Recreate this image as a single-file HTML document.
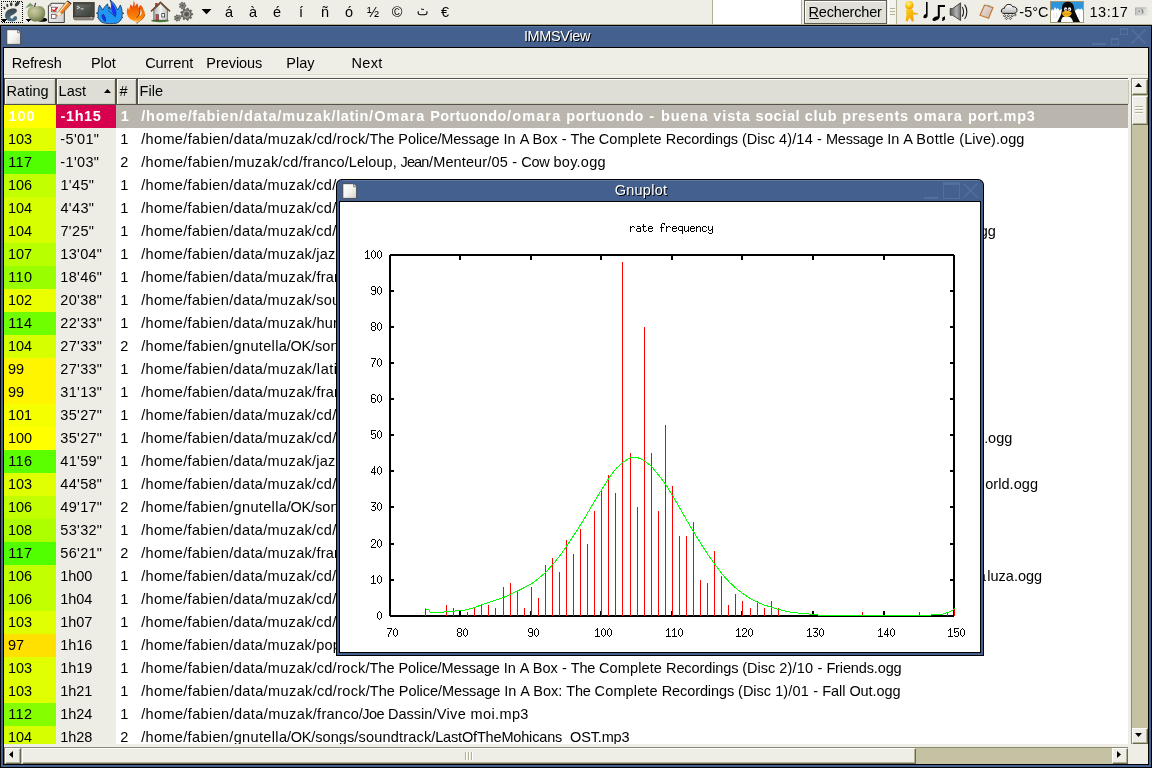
<!DOCTYPE html><html><head><meta charset="utf-8"><title>IMMSView</title><style>

html,body{margin:0;padding:0;}
body{width:1152px;height:768px;overflow:hidden;position:relative;background:#EFEEE6;font-family:'Liberation Sans',sans-serif;font-size:14.5px;color:#000;}
div,span,svg{position:absolute;box-sizing:border-box;}
.t{white-space:pre;line-height:20px;height:20px;}
.row{left:4px;width:1124px;height:23px;}
.c{top:0;height:23px;}
.tbt{top:53px;}
.tx{top:1.2px;white-space:pre;line-height:20px;height:20px;}
.btn{background:#EFEEE6;border-top:1px solid #fff;border-left:1px solid #fff;border-right:1px solid #6A6952;border-bottom:1px solid #6A6952;box-shadow:inset -1px -1px 0 #B4B295;}

</style></head><body><div id="root" style="left:0;top:0;width:1152px;height:768px;overflow:hidden;will-change:transform;background:#EFEEE6">
<div id="panel" style="left:0;top:0;width:1152px;height:25px;background:#EFEEE6;border-bottom:1px solid #B4B295;"></div>
<svg id="picons" style="left:0;top:0" width="1152" height="25" viewBox="0 0 1152 25">
<defs>
<linearGradient id="gfoot" x1="0" y1="0" x2="0" y2="1"><stop offset="0" stop-color="#3B4349"/><stop offset="1" stop-color="#4C7690"/></linearGradient>
<radialGradient id="gapple" cx="0.38" cy="0.32" r="0.75"><stop offset="0" stop-color="#CDCDA4"/><stop offset="0.5" stop-color="#A2A878"/><stop offset="1" stop-color="#65703E"/></radialGradient>
<linearGradient id="gpaper" x1="0" y1="0" x2="1" y2="1"><stop offset="0" stop-color="#FFFFFF"/><stop offset="1" stop-color="#CFCFCF"/></linearGradient>
<linearGradient id="gpencil" x1="0" y1="0" x2="1" y2="1"><stop offset="0" stop-color="#FFD9A0"/><stop offset="0.35" stop-color="#F79A28"/><stop offset="1" stop-color="#D8421C"/></linearGradient>
<linearGradient id="gscreen" x1="0" y1="0" x2="1" y2="1"><stop offset="0" stop-color="#6A706B"/><stop offset="1" stop-color="#3C403C"/></linearGradient>
<linearGradient id="gfire" x1="0" y1="0" x2="0" y2="1"><stop offset="0" stop-color="#D93A10"/><stop offset="0.45" stop-color="#F56A00"/><stop offset="0.8" stop-color="#FF8A08"/><stop offset="1" stop-color="#FFE0B0"/></linearGradient>
<linearGradient id="gwall" x1="0" y1="0" x2="1" y2="0"><stop offset="0" stop-color="#B8B8B8"/><stop offset="0.5" stop-color="#F2F2F2"/><stop offset="1" stop-color="#C4C4C4"/></linearGradient>
<radialGradient id="ghead" cx="0.4" cy="0.3" r="0.7"><stop offset="0" stop-color="#FFF0A0"/><stop offset="0.5" stop-color="#FFD21A"/><stop offset="1" stop-color="#E89A00"/></radialGradient>
<linearGradient id="gbody" x1="0" y1="0" x2="1" y2="1"><stop offset="0" stop-color="#FFD21A"/><stop offset="1" stop-color="#E88E00"/></linearGradient>
<linearGradient id="gspk" x1="0" y1="0" x2="1" y2="0"><stop offset="0" stop-color="#5A5A5A"/><stop offset="0.6" stop-color="#B4B4B4"/><stop offset="1" stop-color="#6E6E6E"/></linearGradient>
<linearGradient id="gclip" x1="0" y1="0" x2="1" y2="1"><stop offset="0" stop-color="#F0E6E0"/><stop offset="1" stop-color="#C8B4AA"/></linearGradient>
<linearGradient id="gcloud" x1="0" y1="0" x2="0" y2="1"><stop offset="0" stop-color="#FFFFFF"/><stop offset="1" stop-color="#B8B8B8"/></linearGradient>
<linearGradient id="gkb" x1="0" y1="0" x2="1" y2="0"><stop offset="0" stop-color="#C4C4C4"/><stop offset="0.6" stop-color="#D8D8D6"/><stop offset="1" stop-color="#EAE9E2"/></linearGradient>
</defs>
<path d="M1 1h1v1h-1zM1 3h1v1h-1zM1 5h1v1h-1zM1 7h1v1h-1zM1 9h1v1h-1zM1 11h1v1h-1zM1 13h1v1h-1zM1 15h1v1h-1zM1 17h1v1h-1zM1 19h1v1h-1zM1 21h1v1h-1zM2 22h1v1h-1zM3 1h1v1h-1zM4 22h1v1h-1zM5 1h1v1h-1zM6 22h1v1h-1zM7 1h1v1h-1zM8 22h1v1h-1zM9 1h1v1h-1zM10 22h1v1h-1zM11 1h1v1h-1zM12 22h1v1h-1zM13 1h1v1h-1zM14 22h1v1h-1zM15 1h1v1h-1zM16 22h1v1h-1zM17 1h1v1h-1zM18 22h1v1h-1zM19 1h1v1h-1zM20 22h1v1h-1zM21 1h1v1h-1zM22 2h1v1h-1zM22 4h1v1h-1zM22 6h1v1h-1zM22 8h1v1h-1zM22 10h1v1h-1zM22 12h1v1h-1zM22 14h1v1h-1zM22 16h1v1h-1zM22 18h1v1h-1zM22 20h1v1h-1zM22 22h1v1h-1z" fill="#000" shape-rendering="crispEdges"/>
<g fill="#34393C"><ellipse cx="17.2" cy="3.9" rx="3" ry="1.7" transform="rotate(-48 17.2 3.9)"/><ellipse cx="11.2" cy="4.2" rx="1.25" ry="2"/><ellipse cx="7.3" cy="5.5" rx="1.0" ry="1.7" transform="rotate(-12 7.3 5.5)"/><ellipse cx="4.4" cy="8" rx="0.9" ry="1.5" transform="rotate(-32 4.4 8)"/></g>
<path d="M16.9 10.6 C16.9 8.3 12.8 8.2 10.3 9 C6.8 10.1 5 12.7 5 15.6 C5 19.2 8 21.4 11.5 21.4 C14.6 21.4 17.1 19.9 17.1 17.9 C17.1 16.2 15.4 15.9 14.2 16.6 C13.2 17.2 13.6 18.5 12.2 18.7 C10.9 18.8 10 17.9 10.3 16.8 C10.7 15.3 12.8 14.9 14.3 13.9 C15.8 12.9 16.9 12.2 16.9 10.6 Z" fill="url(#gfoot)"/>
<path d="M1 19h6v1h-1v1h-1v1h-2v-1h-1v-1h-1z" fill="#000" shape-rendering="crispEdges"/>
<ellipse cx="42.3" cy="19.8" rx="4.8" ry="2" fill="#000"/>
<path d="M36 6.6 C38.5 5.4 43 5.8 44.6 9.5 C46 13 44.8 18.2 42 20.6 C40.5 21.8 39 21 38 21.2 C36.5 21.6 34.5 21.8 32.5 21 C29 19.5 26.8 14.5 27.7 10.5 C28.5 7 32.5 5.6 36 6.6 Z" fill="url(#gapple)"/>
<path d="M25.4 8.6 C27 5 30 3 30.6 3.1 C32 4.3 33.3 5.6 34 6.4 C31 6 28 7 25.4 8.6 Z" fill="#7E9E70"/>
<path d="M34.5 6.8 L35.6 2.8" stroke="#3A3A30" stroke-width="1.1" fill="none"/>
<path d="M26 19h5v1h-1v1h-1v1h-1v-1h-1v-1h-1z" fill="#000" shape-rendering="crispEdges"/>
<path d="M51 3.3 H64.3 V22.5 H48.4 V6 Z" fill="url(#gpaper)" stroke="#2A2A2A" stroke-width="0.9"/>
<path d="M48.4 6 L51 6 L51 3.3" fill="#BBB" stroke="#444" stroke-width="0.6"/>
<rect x="51.4" y="7.2" width="4.6" height="4.6" fill="#fff" stroke="#555" stroke-width="0.8"/>
<rect x="51.4" y="14.3" width="4.6" height="4" fill="#fff" stroke="#555" stroke-width="0.8"/>
<path d="M52.3 9.6 L54.2 11.2 L57.6 7.2" stroke="#F01010" stroke-width="1.3" fill="none"/>
<path d="M56.2 16.6 L57.2 13.3 L66.8 1.3 L70.9 4.2 L60.5 15.4 Z" fill="url(#gpencil)"/>
<path d="M58.2 12.2 L67.4 0.8 L68.6 1.7 L59.3 13 Z" fill="#FFE9C0"/>
<path d="M57.2 13.3 L66.8 1.3 M60.5 15.4 L70.9 4.2" stroke="#5A3A10" stroke-width="0.5" fill="none"/>
<path d="M56.2 16.6 L57.2 13.2 L58.6 11.6 L61.8 14 L60.4 15.4 Z" fill="#F8EDD0"/>
<path d="M56.2 16.6 L56.7 14.8 L58 15.9 Z" fill="#D02020"/>
<path d="M66.8 1.3 L67.6 0.4 L71.6 3.3 L70.9 4.2 Z" fill="#222"/>
<path d="M73.3 2.5 H94.2 V18.6 L93 20.3 H74.6 L73.3 18.6 Z" fill="#56524B"/>
<rect x="73.3" y="2.5" width="20.9" height="14.3" fill="#4A4741" stroke="#2E2C28" stroke-width="0.6"/>
<rect x="75.6" y="4.6" width="15.6" height="11.2" rx="0.8" fill="url(#gscreen)"/>
<path d="M73.8 17.2 H93.7 V18.4 L92.7 19.7 H74.9 L73.8 18.4 Z" fill="#8D897D"/>
<path d="M77 6.2 L79.8 7.5 L77 8.8" stroke="#E8E8E8" stroke-width="0.9" fill="none"/><rect x="80.6" y="8.3" width="3" height="1.2" fill="#C8C8C8"/>
<circle cx="91.3" cy="17.6" r="0.8" fill="#C8C4B4"/>
<path d="M110 0.2 C112.5 1.2 115.5 5 116.6 8 L117.6 10 C118.6 8 119.6 6.4 120.4 5 C121.6 7.6 122.2 10.4 122 12.6 L123.9 13.3 L122 14.2 C122.2 15.2 122.2 16.2 121.9 17 L122.9 17.5 L121.6 18.2 C120.6 21 118.8 22.6 116.6 23.2 C113 23.8 106 23.8 103 22.8 C100.6 22 99 20 98.3 17.8 L97.4 17.4 L98.2 16.8 C97.8 15.6 97.8 14.4 98.1 13.4 L96.3 13.2 L98.2 12.4 C98 9.8 98.6 7.2 99.5 5 C100.8 6.6 102 8.6 102.7 10.2 C103.6 8 105.4 5.4 107.6 3.9 C107.8 5.6 108.4 7.6 109 9 L109.6 6.8 L110.2 9.4 L111.2 8.6 C111.8 5.6 111.4 2.6 110 0.2 Z" fill="#2196F3" stroke="#0A2050" stroke-width="0.7" stroke-linejoin="round"/>
<path d="M111.6 3 C114 5 116.4 9.6 116.4 13 C116.4 15 116 16.2 115.7 17 C113.4 15 111.4 12 111.3 8.6 C111.4 6.4 111.8 4.6 111.6 3 Z" fill="#1C33F0"/>
<path d="M107.8 10.2 L115.8 17" stroke="#0A2050" stroke-width="0.6" fill="none"/>
<path d="M102 15 L103.6 14.4 L105.4 17.6 L105.6 21.4 L103.8 20.6 L102.2 17.6 Z" fill="#1C33F0" stroke="#0A2050" stroke-width="0.5"/>
<path d="M133.6 0.6 C134.8 2.6 135 4.6 134.6 6.4 C135.6 5.4 136.6 4.4 137 3.2 C138 4.6 138.6 6.4 138.4 8 C139.2 7 139.8 6 140 5 C142 6 143.4 7.6 143.2 9.4 C144.6 11 145.4 13.6 144.8 15.8 C144.2 18 141.6 20.2 139 21.6 L136.8 23.4 L135.4 21.6 C131.6 20.8 127.8 18 127 13.8 C126.4 11 127.2 9 128 7.6 C128.4 8.6 128.8 9.6 129.4 10.2 C129.4 8 130 5.8 130.8 4 C131.4 5 132 6 132.4 6.8 C133.4 5 133.8 2.8 133.6 0.6 Z" fill="url(#gfire)"/>
<path d="M140 8.8 C141.9 10.4 142.2 13.2 141 15 C140.4 15.8 139.7 16 139.4 15.6 C140.3 13.6 140.5 11.2 140 8.8 Z" fill="#F3EFE6"/>
<path d="M139.5 8.2 C140.1 10.4 140 13 139 14.9 C138.2 16.2 137.2 17 136.4 17.5" stroke="#3A2412" stroke-width="0.8" fill="none" opacity="0.85"/>
<path d="M144.9 14.6 C144.4 17.4 141.8 19.8 139 21.6" stroke="#5A3010" stroke-width="0.6" fill="none" opacity="0.7"/>
<path d="M138.8 21.7 L136.8 23.4 L136.2 22.6" stroke="#3A2412" stroke-width="0.6" fill="none"/>
<ellipse cx="160" cy="20.8" rx="9" ry="1.5" fill="#3E7E2E"/>
<rect x="155.2" y="3" width="2.4" height="4.2" fill="#B43232"/>
<path d="M153.8 10 L160.5 3.6 L167.4 10 V20.2 H153.8 Z" fill="url(#gwall)" stroke="#444" stroke-width="0.7"/>
<path d="M151 11.4 L160.5 2.3 L170 11.4" fill="none" stroke="#6E4A2C" stroke-width="1.5"/>
<rect x="156" y="14.6" width="2.6" height="5.6" fill="#D84444" stroke="#333" stroke-width="0.5"/>
<rect x="161.8" y="13.6" width="2.8" height="3.4" fill="#fff" stroke="#333" stroke-width="0.8"/>
<polygon points="185.97,5.17 185.97,6.03 184.99,6.40 184.71,6.97 185.04,7.97 184.37,8.50 183.46,7.96 182.85,8.10 182.26,8.98 181.43,8.79 181.29,7.75 180.80,7.35 179.75,7.45 179.38,6.68 180.10,5.92 180.10,5.28 179.38,4.52 179.75,3.75 180.80,3.85 181.29,3.45 181.43,2.41 182.26,2.22 182.85,3.10 183.46,3.24 184.37,2.70 185.04,3.23 184.71,4.23 184.99,4.80" fill="#6A6A66" stroke="#3C3C3A" stroke-width="0.5"/><circle cx="182.6" cy="5.6" r="1.768" fill="none" stroke="#BDB69A" stroke-width="0.51"/><circle cx="182.6" cy="5.6" r="0.9" fill="#55555A"/>
<polygon points="180.77,17.59 180.77,18.41 179.82,18.78 179.55,19.33 179.86,20.30 179.22,20.82 178.34,20.29 177.74,20.43 177.17,21.28 176.37,21.10 176.23,20.09 175.75,19.70 174.73,19.79 174.37,19.05 175.08,18.31 175.08,17.69 174.37,16.95 174.73,16.21 175.75,16.30 176.23,15.91 176.37,14.90 177.17,14.72 177.74,15.57 178.34,15.71 179.22,15.18 179.86,15.70 179.55,16.67 179.82,17.22" fill="#6A6A66" stroke="#3C3C3A" stroke-width="0.5"/><circle cx="177.5" cy="18" r="1.716" fill="none" stroke="#BDB69A" stroke-width="0.495"/><circle cx="177.5" cy="18" r="0.9" fill="#55555A"/>
<polygon points="192.77,13.59 192.77,14.81 191.04,15.34 190.74,16.18 191.72,17.70 190.94,18.63 189.27,17.93 188.50,18.38 188.27,20.17 187.08,20.38 186.25,18.77 185.37,18.62 184.04,19.85 182.99,19.24 183.39,17.48 182.81,16.79 181.01,16.88 180.59,15.74 182.03,14.65 182.03,13.75 180.59,12.66 181.01,11.52 182.81,11.61 183.39,10.92 182.99,9.16 184.04,8.55 185.37,9.78 186.25,9.63 187.08,8.02 188.27,8.23 188.50,10.02 189.27,10.47 190.94,9.77 191.72,10.70 190.74,12.22 191.04,13.06" fill="#6A6A66" stroke="#3C3C3A" stroke-width="0.5"/><circle cx="186.6" cy="14.2" r="3.224" fill="none" stroke="#BDB69A" stroke-width="0.93"/><circle cx="186.6" cy="14.2" r="1.7" fill="#55555A"/>
<path d="M201.5 9 H211.5 L206.5 14.2 Z" fill="#000"/>
<path d="M418.2 11.3 V13.2 C418.2 14.6 419.4 14.8 422.6 14.8 C425.8 14.8 426.9 14.6 426.9 13.2 V11.3" fill="none" stroke="#000" stroke-width="1.1"/>
<path d="M421.4 8.2 L423 9.1 L421.4 10 Z M422.6 8.9 h1.3 v1.1 h-1.3z" fill="#000"/>
<rect x="712" y="0" width="1" height="24" fill="#B4B295"/><rect x="713" y="0" width="88" height="24" fill="#fff"/><rect x="801" y="0" width="1" height="24" fill="#B4B295"/>
<rect x="804.5" y="0.5" width="82" height="23" fill="#E0E0D8" stroke="#5E5D50" stroke-width="1"/>
<path d="M805.5 22.5 V1.5 H885.5" fill="none" stroke="#fff" stroke-width="1"/>
<rect x="809.5" y="18" width="9.3" height="1" fill="#000"/>
<rect x="888" y="0" width="9" height="24" fill="#F4F3EC"/><rect x="896" y="0" width="1" height="24" fill="#B4B295"/><rect x="888" y="0" width="1" height="24" fill="#fff"/>
<path d="M890 8h5v1h-5zM890 11h5v1h-5zM890 14h5v1h-5z" fill="#B4B295"/>
<path d="M906 9.6 C908 8.8 911 8.8 912.6 9.6 L913.4 12.2 L918.2 13.4 L917.6 14.4 L913.2 14.6 L913.6 21.2 L912 21.4 L909.6 17.6 L907.6 21.4 L905.6 21 L906.4 15 Z" fill="url(#gbody)"/>
<circle cx="909.3" cy="5.2" r="4.1" fill="url(#ghead)"/>
<path d="M926 2 h1.6 V15.6 C927.6 17.6 925.8 18.4 924.4 18.2 C923.2 18 923 16.4 924 15.2 C924.6 14.4 925.4 14 926 14 Z" fill="#000"/>
<path d="M937.8 5 H945 V7 H939.8 V16.6 C939.8 18.8 937.6 20 935.4 20.8 C933.4 21.4 932 20.6 932.6 19 C933.2 17.4 935.6 16.4 937.8 16.2 Z" fill="#000"/>
<path d="M942.4 17.6 L945 16.2 V19.6 L943 21 H942.2 Z" fill="#000"/>
<path d="M950.2 8.6 H952.6 L960.6 2.8 V20.6 L952.6 15.2 H950.2 Z" fill="url(#gspk)" stroke="#2E2E2E" stroke-width="0.8"/>
<path d="M962.2 7 C964 9.6 964 14 962.2 16.6 M964.6 4.6 C967.6 8.4 967.6 15.2 964.6 19" fill="none" stroke="#1A1A1A" stroke-width="1.1"/>
<path d="M984.6 5 L993 7.6 L988.6 18.2 L980 15.2 Z" fill="url(#gclip)" stroke="#C07A34" stroke-width="1.2" stroke-linejoin="round"/>
<path d="M987.4 4.6 L990.6 5.6 L990.2 6.8 L987 5.8 Z" fill="#A8A8A8"/>
<path d="M1004 13.4 C1001.6 13.4 1000.8 11.4 1001.6 9.8 C1002.2 8.6 1003.4 8.2 1004.4 8.4 C1004.6 6.2 1006.4 4.4 1008.8 4.4 C1010.8 4.4 1012.2 5.4 1012.8 6.8 C1015.2 6.4 1017.2 8.2 1017 10.4 C1016.9 12.2 1015.6 13.4 1014 13.4 Z" fill="url(#gcloud)" stroke="#000" stroke-width="0.9"/>
<g fill="none" stroke="#000" stroke-width="0.7"><path d="M1004.6 14.6l1.2 1.2l-1.2 1.2l-1.2-1.2z"/><path d="M1008.4 14.6l1.2 1.2l-1.2 1.2l-1.2-1.2z"/><path d="M1012.2 14.6l1.2 1.2l-1.2 1.2l-1.2-1.2z"/><path d="M1006.4 17.2l1.2 1.2l-1.2 1.2l-1.2-1.2z"/><path d="M1010.4 17.2l1.2 1.2l-1.2 1.2l-1.2-1.2z"/><path d="M1015.4 14.2l0.9 0.9l-0.9 0.9l-0.9-0.9z"/></g>
<rect x="1050.5" y="1.5" width="33" height="21" fill="#2F94DA" stroke="#A09A74" stroke-width="1"/>
<path d="M1051 22 V11 L1052.4 9 L1053.4 10.4 L1055 7 L1056.4 9.6 L1057.8 7.8 L1059.6 10.4 L1061.4 8.8 L1063 10 V22 Z" fill="#fff"/>
<path d="M1072 22 V11 L1074.2 9.8 L1075.6 10.6 L1077 9.2 L1078.6 8.4 L1080 9.8 L1081.4 8.2 L1083 10.6 V22 Z" fill="#fff"/>
<path d="M1053.4 14 l1 4 M1056.8 13 l-0.6 5 M1079 13.4 l0.8 4.6 M1076.6 14 l-0.4 4" stroke="#D4DCE4" stroke-width="0.7"/>
<path d="M1067.8 1.8 C1071.6 1.8 1073.6 4.4 1074 7.6 C1074.4 10.8 1075.6 13.2 1077 16 C1078.2 18.4 1079.2 20.2 1080 22 H1057.2 C1058.4 19.8 1059.8 17.4 1060.8 15 C1061.8 12.4 1061.8 9.8 1062 7.2 C1062.4 4 1064.4 1.8 1067.8 1.8 Z" fill="#0A0A0A"/>
<path d="M1062.4 17.6 C1064 16.4 1068.6 16.2 1070.6 17.4 C1072 18.8 1072.8 20.4 1073 22 H1061 C1061 20.4 1061.6 18.8 1062.4 17.6 Z" fill="#fff"/>
<ellipse cx="1065.6" cy="9.2" rx="1.5" ry="1.9" fill="#fff"/><ellipse cx="1069.5" cy="9.2" rx="1.6" ry="2" fill="#fff"/><circle cx="1066" cy="9.8" r="0.7" fill="#000"/><circle cx="1069.1" cy="9.8" r="0.7" fill="#000"/>
<path d="M1061.8 13 C1063.4 11 1066.2 10.6 1067.6 10.8 C1069.2 10.8 1071.2 11.8 1071.8 13.2 C1071 15.2 1068.6 17 1066.2 17.2 C1064.2 17 1062.2 15.2 1061.8 13 Z" fill="#F7B416"/>
<path d="M1062.6 13.4 C1065 14.4 1068.6 14.2 1071 13.2" stroke="#B87400" stroke-width="0.6" fill="none"/>
<rect x="1135" y="7.5" width="13.5" height="8" fill="url(#gkb)"/><path d="M1135.5 15 V8 H1146" fill="none" stroke="#A8A8A4" stroke-width="0.8"/>
<path d="M1141.2 9.6 c1.6 -0.4 2.2 1 0.8 1.6 c1.8 0.2 1.6 2 -0.4 2 M1138.4 11.2 h1.6" stroke="#4A4A4A" stroke-width="0.7" fill="none"/>
</svg>
<span class="t" style="left:217px;top:2px;width:24px;text-align:center;">á</span>
<span class="t" style="left:241px;top:2px;width:24px;text-align:center;">à</span>
<span class="t" style="left:265px;top:2px;width:24px;text-align:center;">é</span>
<span class="t" style="left:289px;top:2px;width:24px;text-align:center;">í</span>
<span class="t" style="left:313px;top:2px;width:24px;text-align:center;">ñ</span>
<span class="t" style="left:337px;top:2px;width:24px;text-align:center;">ó</span>
<span class="t" style="left:361px;top:2px;width:24px;text-align:center;">½</span>
<span class="t" style="left:385px;top:2px;width:24px;text-align:center;">©</span>
<span class="t" style="left:433px;top:2px;width:24px;text-align:center;">€</span>
<span class="t" id="rech" style="left:808.5px;top:2px;letter-spacing:-0.17px">Rechercher</span>
<span class="t" id="temp" style="left:1019.3px;top:2px;">-5°C</span>
<span class="t" id="clock" style="left:1089.5px;top:2px;letter-spacing:0.5px">13:17</span>
<div id="mainwin" style="left:0;top:25px;width:1152px;height:743px;background:#000;"></div>
<div style="left:1px;top:26px;width:1150px;height:741px;background:#43608F;"></div>
<div style="left:3px;top:47px;width:1146px;height:718px;background:#000;"></div>
<div id="content" style="left:4px;top:48px;width:1144px;height:716px;background:#EFEEE6;"></div>
<div class="t" style="left:357px;top:26px;width:400px;text-align:center;color:#fff;line-height:21px;height:21px;letter-spacing:-0.35px;text-shadow:1px 1px 0 #000;" id="maintitle">IMMSView</div>
<div style="left:1px;top:26px;width:1150px;height:1px;background:#5A78A8;"></div>
<svg style="left:6px;top:28.6px" width="16" height="17" viewBox="0 0 16 17"><defs><linearGradient id="gwi6" x1="0" y1="0" x2="1" y2="1"><stop offset="0" stop-color="#FFFFFF"/><stop offset="0.5" stop-color="#F4F4F2"/><stop offset="1" stop-color="#CFCFCB"/></linearGradient></defs><path d="M0.8 0.7 H11.6 L14.6 3.8 V15.4 H0.8 Z" fill="url(#gwi6)" stroke="#3A3A3A" stroke-width="0.8"/><path d="M11.6 0.7 V3.8 H14.6" fill="#E6E6E2" stroke="#555" stroke-width="0.7"/></svg>
<svg style="left:1088px;top:26px" width="60" height="21" viewBox="1088 26 60 21" shape-rendering="crispEdges"><rect x="1092" y="43" width="14" height="2" fill="#52709E"/><path d="M1120 28h8v7h-8z M1121 30v4h6v-4z" fill="#52709E" fill-rule="evenodd"/><path d="M1111 38h8v7h-8z M1112 40v4h6v-4z" fill="#52709E" fill-rule="evenodd"/><path d="M1131.5 29.5 L1145.5 43.5 M1145.5 29.5 L1131.5 43.5" stroke="#52709E" stroke-width="1.6" fill="none" shape-rendering="auto"/></svg>
<span class="t tbt" style="left:11.64px;letter-spacing:-0.11px">Refresh</span>
<span class="t tbt" style="left:90.90px;letter-spacing:0.00px">Plot</span>
<span class="t tbt" style="left:145.17px;letter-spacing:-0.05px">Current</span>
<span class="t tbt" style="left:206.27px;letter-spacing:-0.05px">Previous</span>
<span class="t tbt" style="left:286.37px;letter-spacing:-0.05px">Play</span>
<span class="t tbt" style="left:351.55px;letter-spacing:0.29px">Next</span>
<div style="left:4px;top:74px;width:1144px;height:1px;background:#DAD9CA;"></div>
<div style="left:4px;top:75px;width:1144px;height:1px;background:#F7F6F1;"></div>
<div id="tree" style="left:4px;top:78px;width:1124px;height:666px;background:#fff;overflow:hidden;">
<div style="left:52px;top:0;width:60px;height:666px;background:#EEEDE5;"></div>
</div>
<div style="left:4px;top:78px;width:1124px;height:27px;background:#56544A;"></div>
<div style="left:5px;top:79px;width:50px;height:25px;background:#fff;"></div>
<div style="left:6px;top:80px;width:49px;height:24px;background:#DEDED6;border-bottom:1px solid #D0CEBC;border-right:1px solid #C9C7B2;"></div>
<span class="t" style="left:6.6px;top:81.3px;">Rating</span>
<div style="left:57px;top:79px;width:58px;height:25px;background:#fff;"></div>
<div style="left:58px;top:80px;width:57px;height:24px;background:#DEDED6;border-bottom:1px solid #D0CEBC;border-right:1px solid #C9C7B2;"></div>
<span class="t" style="left:58.6px;top:81.3px;">Last</span>
<div style="left:117px;top:79px;width:19px;height:25px;background:#fff;"></div>
<div style="left:118px;top:80px;width:18px;height:24px;background:#DEDED6;border-bottom:1px solid #D0CEBC;border-right:1px solid #C9C7B2;"></div>
<span class="t" style="left:119.5px;top:81.3px;">#</span>
<div style="left:138px;top:79px;width:991px;height:25px;background:#fff;"></div>
<div style="left:139px;top:80px;width:990px;height:24px;background:#DEDED6;border-bottom:1px solid #D0CEBC;border-right:1px solid #C9C7B2;"></div>
<span class="t" style="left:139.6px;top:81.3px;">File</span>
<svg style="left:104px;top:89px" width="7" height="4"><path d="M0 4 L3.5 0 L7 4 Z" fill="#000"/></svg>
<div class="row" style="top:105px;height:23px;overflow:hidden;color:#fff;font-weight:bold;">
<div class="c" style="left:112px;width:1012px;background:#BAB6AE;"></div>
<div class="c" style="left:52px;width:60px;background:#D6004F;"></div>
<div class="c" style="left:0;width:52px;background:#FFFF00;"></div>
<span class="tx" style="left:4.57px;letter-spacing:0.93px">100</span>
<span class="tx" style="left:56.51px;letter-spacing:0.62px">-1h15</span>
<span class="tx" style="left:116.76px;letter-spacing:0.92px">1</span>
<span class="tx" style="left:137.36px;letter-spacing:0.72px">/home</span><span class="tx" style="left:183.65px;letter-spacing:0.66px">/fabien</span><span class="tx" style="left:235.11px;letter-spacing:0.88px">/data</span><span class="tx" style="left:273.36px;letter-spacing:0.87px">/muzak</span><span class="tx" style="left:327.58px;letter-spacing:0.57px">/latin</span><span class="tx" style="left:365.08px;letter-spacing:1.06px">/Omara </span><span class="tx" style="left:426.15px;letter-spacing:0.36px">Portuondo</span><span class="tx" style="left:503.05px;letter-spacing:1.12px">/omara </span><span class="tx" style="left:562.20px;letter-spacing:0.60px">portuondo </span><span class="tx" style="left:645.27px;letter-spacing:1.61px">- </span><span class="tx" style="left:657.02px;letter-spacing:0.94px">buena </span><span class="tx" style="left:709.34px;letter-spacing:0.87px">vista </span><span class="tx" style="left:751.49px;letter-spacing:0.60px">social </span><span class="tx" style="left:800.87px;letter-spacing:0.68px">club </span><span class="tx" style="left:838.17px;letter-spacing:0.78px">presents </span><span class="tx" style="left:909.84px;letter-spacing:1.13px">omara </span><span class="tx" style="left:963.98px;letter-spacing:0.68px">port.mp3</span>
</div>
<div class="row" style="top:128px;height:23px;overflow:hidden;">
<div class="c" style="left:0;width:52px;background:#E0FF00;"></div>
<span class="tx" style="left:4.07px;letter-spacing:-0.07px">103</span>
<span class="tx" style="left:56.37px;letter-spacing:0.34px">-5&#x27;01&quot;</span>
<span class="tx" style="left:116.26px;letter-spacing:-0.08px">1</span>
<span class="tx" style="left:137.18px;letter-spacing:0.35px">/home</span><span class="tx" style="left:179.25px;letter-spacing:0.36px">/fabien</span><span class="tx" style="left:225.32px;letter-spacing:0.36px">/data</span><span class="tx" style="left:259.39px;letter-spacing:0.39px">/muzak</span><span class="tx" style="left:308.39px;letter-spacing:0.23px">/cd</span><span class="tx" style="left:328.47px;letter-spacing:0.33px">/rock</span><span class="tx" style="left:361.36px;letter-spacing:0.00px">/The </span><span class="tx" style="left:394.37px;letter-spacing:-0.07px">Police</span><span class="tx" style="left:433.43px;letter-spacing:-0.09px">/Message </span><span class="tx" style="left:499.56px;letter-spacing:-0.03px">In </span><span class="tx" style="left:515.63px;letter-spacing:0.06px">A </span><span class="tx" style="left:528.62px;letter-spacing:0.01px">Box </span><span class="tx" style="left:557.71px;letter-spacing:0.08px">- </span><span class="tx" style="left:566.56px;letter-spacing:-0.24px">The </span><span class="tx" style="left:594.78px;letter-spacing:0.11px">Complete </span><span class="tx" style="left:661.78px;letter-spacing:-0.11px">Recordings </span><span class="tx" style="left:737.95px;letter-spacing:-0.00px">(Disc </span><span class="tx" style="left:775.04px;letter-spacing:0.06px">4)</span><span class="tx" style="left:788.14px;letter-spacing:0.21px">/14 </span><span class="tx" style="left:813.11px;letter-spacing:0.08px">- </span><span class="tx" style="left:821.98px;letter-spacing:-0.22px">Message </span><span class="tx" style="left:883.17px;letter-spacing:-0.03px">In </span><span class="tx" style="left:899.24px;letter-spacing:0.06px">A </span><span class="tx" style="left:912.37px;letter-spacing:0.28px">Bottle </span><span class="tx" style="left:955.33px;letter-spacing:0.06px">(Live).ogg</span>
</div>
<div class="row" style="top:151px;height:23px;overflow:hidden;">
<div class="c" style="left:0;width:52px;background:#52FF00;"></div>
<span class="tx" style="left:4.25px;letter-spacing:0.29px">117</span>
<span class="tx" style="left:56.37px;letter-spacing:0.34px">-1&#x27;03&quot;</span>
<span class="tx" style="left:116.26px;letter-spacing:-0.08px">2</span>
<span class="tx" style="left:137.18px;letter-spacing:0.37px">/home</span><span class="tx" style="left:179.33px;letter-spacing:0.37px">/fabien</span><span class="tx" style="left:225.51px;letter-spacing:0.40px">/muzak</span><span class="tx" style="left:274.59px;letter-spacing:0.24px">/cd</span><span class="tx" style="left:294.67px;letter-spacing:0.26px">/franco</span><span class="tx" style="left:340.73px;letter-spacing:0.06px">/Leloup, </span><span class="tx" style="left:396.48px;letter-spacing:-0.84px">Jean</span><span class="tx" style="left:425.05px;letter-spacing:0.12px">/Menteur</span><span class="tx" style="left:483.31px;letter-spacing:0.22px">/05 </span><span class="tx" style="left:508.32px;letter-spacing:0.09px">- </span><span class="tx" style="left:517.19px;letter-spacing:-0.23px">Cow </span><span class="tx" style="left:549.54px;letter-spacing:0.24px">boy.ogg</span>
</div>
<div class="row" style="top:174px;height:23px;overflow:hidden;">
<div class="c" style="left:0;width:52px;background:#C2FF00;"></div>
<span class="tx" style="left:4.07px;letter-spacing:-0.07px">106</span>
<span class="tx" style="left:56.39px;letter-spacing:0.38px">1&#x27;45&quot;</span>
<span class="tx" style="left:116.26px;letter-spacing:-0.08px">1</span>
<span class="tx" style="left:137.17px;letter-spacing:0.34px">/home</span><span class="tx" style="left:179.18px;letter-spacing:0.35px">/fabien</span><span class="tx" style="left:225.18px;letter-spacing:0.35px">/data</span><span class="tx" style="left:259.19px;letter-spacing:0.38px">/muzak</span><span class="tx" style="left:308.11px;letter-spacing:0.22px">/cd</span><span class="tx" style="left:328.16px;letter-spacing:0.32px">/rock</span><span class="tx" style="left:361.00px;letter-spacing:-0.01px">/The </span><span class="tx" style="left:393.96px;letter-spacing:-0.08px">Police</span><span class="tx" style="left:432.95px;letter-spacing:-0.10px">/Message </span><span class="tx" style="left:498.98px;letter-spacing:-0.04px">In </span><span class="tx" style="left:515.02px;letter-spacing:0.05px">A </span><span class="tx" style="left:528.00px;letter-spacing:-0.00px">Box </span><span class="tx" style="left:557.04px;letter-spacing:0.07px">- </span><span class="tx" style="left:565.87px;letter-spacing:-0.25px">The </span><span class="tx" style="left:594.05px;letter-spacing:0.10px">Complete </span><span class="tx" style="left:660.94px;letter-spacing:-0.12px">Recordings </span><span class="tx" style="left:736.99px;letter-spacing:-0.01px">(Disc </span><span class="tx" style="left:774.02px;letter-spacing:0.05px">1)</span><span class="tx" style="left:787.10px;letter-spacing:0.20px">/05 </span><span class="tx" style="left:812.04px;letter-spacing:0.07px">- </span><span class="tx" style="left:820.71px;letter-spacing:-0.59px">So </span><span class="tx" style="left:841.06px;letter-spacing:0.11px">Lonely.ogg</span>
</div>
<div class="row" style="top:197px;height:23px;overflow:hidden;">
<div class="c" style="left:0;width:52px;background:#D6FF00;"></div>
<span class="tx" style="left:4.07px;letter-spacing:-0.07px">104</span>
<span class="tx" style="left:56.39px;letter-spacing:0.38px">4&#x27;43&quot;</span>
<span class="tx" style="left:116.26px;letter-spacing:-0.08px">1</span>
<span class="tx" style="left:137.17px;letter-spacing:0.34px">/home</span><span class="tx" style="left:179.18px;letter-spacing:0.35px">/fabien</span><span class="tx" style="left:225.18px;letter-spacing:0.35px">/data</span><span class="tx" style="left:259.19px;letter-spacing:0.38px">/muzak</span><span class="tx" style="left:308.11px;letter-spacing:0.22px">/cd</span><span class="tx" style="left:328.16px;letter-spacing:0.32px">/rock</span><span class="tx" style="left:361.00px;letter-spacing:-0.01px">/The </span><span class="tx" style="left:393.96px;letter-spacing:-0.08px">Police</span><span class="tx" style="left:432.95px;letter-spacing:-0.10px">/Message </span><span class="tx" style="left:498.98px;letter-spacing:-0.04px">In </span><span class="tx" style="left:515.02px;letter-spacing:0.05px">A </span><span class="tx" style="left:528.00px;letter-spacing:-0.00px">Box </span><span class="tx" style="left:557.04px;letter-spacing:0.07px">- </span><span class="tx" style="left:565.87px;letter-spacing:-0.25px">The </span><span class="tx" style="left:594.05px;letter-spacing:0.10px">Complete </span><span class="tx" style="left:660.94px;letter-spacing:-0.12px">Recordings </span><span class="tx" style="left:736.99px;letter-spacing:-0.01px">(Disc </span><span class="tx" style="left:774.02px;letter-spacing:0.05px">2)</span><span class="tx" style="left:787.10px;letter-spacing:0.20px">/04 </span><span class="tx" style="left:812.04px;letter-spacing:0.07px">- </span><span class="tx" style="left:821.04px;letter-spacing:0.08px">Deathwish.ogg</span>
</div>
<div class="row" style="top:220px;height:23px;overflow:hidden;">
<div class="c" style="left:0;width:52px;background:#D6FF00;"></div>
<span class="tx" style="left:4.07px;letter-spacing:-0.07px">104</span>
<span class="tx" style="left:56.39px;letter-spacing:0.38px">7&#x27;25&quot;</span>
<span class="tx" style="left:116.26px;letter-spacing:-0.08px">1</span>
<span class="tx" style="left:137.17px;letter-spacing:0.34px">/home</span><span class="tx" style="left:179.18px;letter-spacing:0.35px">/fabien</span><span class="tx" style="left:225.18px;letter-spacing:0.35px">/data</span><span class="tx" style="left:259.19px;letter-spacing:0.38px">/muzak</span><span class="tx" style="left:308.11px;letter-spacing:0.22px">/cd</span><span class="tx" style="left:328.16px;letter-spacing:0.32px">/rock</span><span class="tx" style="left:361.00px;letter-spacing:-0.01px">/The </span><span class="tx" style="left:393.96px;letter-spacing:-0.08px">Police</span><span class="tx" style="left:432.95px;letter-spacing:-0.10px">/Message </span><span class="tx" style="left:498.98px;letter-spacing:-0.04px">In </span><span class="tx" style="left:515.02px;letter-spacing:0.05px">A </span><span class="tx" style="left:528.00px;letter-spacing:-0.00px">Box </span><span class="tx" style="left:557.04px;letter-spacing:0.07px">- </span><span class="tx" style="left:565.87px;letter-spacing:-0.25px">The </span><span class="tx" style="left:594.05px;letter-spacing:0.10px">Complete </span><span class="tx" style="left:566.34px;letter-spacing:-0.12px">Recordings </span><span class="tx" style="left:642.39px;letter-spacing:-0.01px">(Disc </span><span class="tx" style="left:679.42px;letter-spacing:0.05px">3)</span><span class="tx" style="left:692.50px;letter-spacing:0.20px">/12 </span><span class="tx" style="left:717.44px;letter-spacing:0.07px">- </span><span class="tx" style="left:726.39px;letter-spacing:-0.02px">Every </span><span class="tx" style="left:767.57px;letter-spacing:0.33px">Little </span><span class="tx" style="left:804.37px;letter-spacing:-0.05px">Thing </span><span class="tx" style="left:844.17px;letter-spacing:-0.46px">She </span><span class="tx" style="left:872.31px;letter-spacing:-0.18px">Does </span><span class="tx" style="left:909.35px;letter-spacing:-0.10px">Is </span><span class="tx" style="left:924.34px;letter-spacing:-0.11px">Magic.o</span><span class="tx" style="left:975.86px;letter-spacing:-0.07px">gg</span>
</div>
<div class="row" style="top:243px;height:23px;overflow:hidden;">
<div class="c" style="left:0;width:52px;background:#B8FF00;"></div>
<span class="tx" style="left:4.07px;letter-spacing:-0.07px">107</span>
<span class="tx" style="left:56.35px;letter-spacing:0.30px">13&#x27;04&quot;</span>
<span class="tx" style="left:116.26px;letter-spacing:-0.08px">1</span>
<span class="tx" style="left:137.17px;letter-spacing:0.34px">/home</span><span class="tx" style="left:179.18px;letter-spacing:0.35px">/fabien</span><span class="tx" style="left:225.18px;letter-spacing:0.35px">/data</span><span class="tx" style="left:259.19px;letter-spacing:0.38px">/muzak</span><span class="tx" style="left:308.12px;letter-spacing:0.23px">/jazz</span><span class="tx" style="left:339.08px;letter-spacing:0.16px">/Miles </span><span class="tx" style="left:382.07px;letter-spacing:0.15px">Davis</span><span class="tx" style="left:419.08px;letter-spacing:0.15px">/Kind </span><span class="tx" style="left:456.94px;letter-spacing:-0.11px">Of </span><span class="tx" style="left:476.00px;letter-spacing:-0.01px">Blue</span><span class="tx" style="left:505.10px;letter-spacing:0.20px">/01 </span><span class="tx" style="left:530.04px;letter-spacing:0.07px">- </span><span class="tx" style="left:538.71px;letter-spacing:-0.59px">So </span><span class="tx" style="left:559.00px;letter-spacing:-0.01px">What.ogg</span>
</div>
<div class="row" style="top:266px;height:23px;overflow:hidden;">
<div class="c" style="left:0;width:52px;background:#99FF00;"></div>
<span class="tx" style="left:4.25px;letter-spacing:0.29px">110</span>
<span class="tx" style="left:56.35px;letter-spacing:0.30px">18&#x27;46&quot;</span>
<span class="tx" style="left:116.26px;letter-spacing:-0.08px">1</span>
<span class="tx" style="left:137.17px;letter-spacing:0.34px">/home</span><span class="tx" style="left:179.18px;letter-spacing:0.35px">/fabien</span><span class="tx" style="left:225.18px;letter-spacing:0.35px">/data</span><span class="tx" style="left:259.19px;letter-spacing:0.38px">/muzak</span><span class="tx" style="left:308.12px;letter-spacing:0.24px">/franco</span><span class="tx" style="left:353.97px;letter-spacing:-0.05px">/Brassens</span><span class="tx" style="left:417.96px;letter-spacing:-0.09px">/Les </span><span class="tx" style="left:449.00px;letter-spacing:-0.00px">copains </span><span class="tx" style="left:502.98px;letter-spacing:-0.05px">d </span><span class="tx" style="left:515.04px;letter-spacing:0.07px">abord.mp3</span>
</div>
<div class="row" style="top:289px;height:23px;overflow:hidden;">
<div class="c" style="left:0;width:52px;background:#EBFF00;"></div>
<span class="tx" style="left:4.07px;letter-spacing:-0.07px">102</span>
<span class="tx" style="left:56.35px;letter-spacing:0.30px">20&#x27;38&quot;</span>
<span class="tx" style="left:116.26px;letter-spacing:-0.08px">1</span>
<span class="tx" style="left:137.17px;letter-spacing:0.34px">/home</span><span class="tx" style="left:179.18px;letter-spacing:0.35px">/fabien</span><span class="tx" style="left:225.18px;letter-spacing:0.35px">/data</span><span class="tx" style="left:259.19px;letter-spacing:0.38px">/muzak</span><span class="tx" style="left:308.09px;letter-spacing:0.18px">/soundtrack</span><span class="tx" style="left:385.19px;letter-spacing:0.38px">/Amelie</span><span class="tx" style="left:436.10px;letter-spacing:0.20px">/04 </span><span class="tx" style="left:461.04px;letter-spacing:0.07px">- </span><span class="tx" style="left:470.07px;letter-spacing:0.14px">Comptine.mp3</span>
</div>
<div class="row" style="top:312px;height:23px;overflow:hidden;">
<div class="c" style="left:0;width:52px;background:#70FF00;"></div>
<span class="tx" style="left:4.25px;letter-spacing:0.29px">114</span>
<span class="tx" style="left:56.35px;letter-spacing:0.30px">22&#x27;33&quot;</span>
<span class="tx" style="left:116.26px;letter-spacing:-0.08px">1</span>
<span class="tx" style="left:137.17px;letter-spacing:0.34px">/home</span><span class="tx" style="left:179.18px;letter-spacing:0.35px">/fabien</span><span class="tx" style="left:225.18px;letter-spacing:0.35px">/data</span><span class="tx" style="left:259.19px;letter-spacing:0.38px">/muzak</span><span class="tx" style="left:308.13px;letter-spacing:0.26px">/humour</span><span class="tx" style="left:362.99px;letter-spacing:-0.03px">/Coluche</span><span class="tx" style="left:419.98px;letter-spacing:-0.05px">/Le </span><span class="tx" style="left:444.19px;letter-spacing:0.38px">flic.mp3</span>
</div>
<div class="row" style="top:335px;height:23px;overflow:hidden;">
<div class="c" style="left:0;width:52px;background:#D6FF00;"></div>
<span class="tx" style="left:4.07px;letter-spacing:-0.07px">104</span>
<span class="tx" style="left:56.35px;letter-spacing:0.30px">27&#x27;33&quot;</span>
<span class="tx" style="left:116.26px;letter-spacing:-0.08px">2</span>
<span class="tx" style="left:137.17px;letter-spacing:0.34px">/home</span><span class="tx" style="left:179.18px;letter-spacing:0.35px">/fabien</span><span class="tx" style="left:225.18px;letter-spacing:0.35px">/gnutella</span><span class="tx" style="left:282.84px;letter-spacing:-0.33px">/OK</span><span class="tx" style="left:307.02px;letter-spacing:0.04px">/songs</span><span class="tx" style="left:350.16px;letter-spacing:0.32px">/rock</span><span class="tx" style="left:383.11px;letter-spacing:0.22px">/Dire </span><span class="tx" style="left:419.05px;letter-spacing:0.11px">Straits </span><span class="tx" style="left:465.04px;letter-spacing:0.07px">- </span><span class="tx" style="left:474.02px;letter-spacing:0.04px">Sultans.mp3</span>
</div>
<div class="row" style="top:358px;height:23px;overflow:hidden;">
<div class="c" style="left:0;width:52px;background:#FFF500;"></div>
<span class="tx" style="left:4.06px;letter-spacing:-0.07px">99</span>
<span class="tx" style="left:56.35px;letter-spacing:0.30px">27&#x27;33&quot;</span>
<span class="tx" style="left:116.26px;letter-spacing:-0.08px">1</span>
<span class="tx" style="left:137.17px;letter-spacing:0.34px">/home</span><span class="tx" style="left:179.18px;letter-spacing:0.35px">/fabien</span><span class="tx" style="left:225.18px;letter-spacing:0.35px">/data</span><span class="tx" style="left:259.19px;letter-spacing:0.38px">/muzak</span><span class="tx" style="left:308.28px;letter-spacing:0.56px">/latin</span><span class="tx" style="left:342.06px;letter-spacing:0.12px">/Compay </span><span class="tx" style="left:404.85px;letter-spacing:-0.29px">Segundo</span><span class="tx" style="left:460.94px;letter-spacing:-0.12px">/Chan </span><span class="tx" style="left:502.94px;letter-spacing:-0.11px">Chan.mp3</span>
</div>
<div class="row" style="top:381px;height:23px;overflow:hidden;">
<div class="c" style="left:0;width:52px;background:#FFF500;"></div>
<span class="tx" style="left:4.06px;letter-spacing:-0.07px">99</span>
<span class="tx" style="left:56.35px;letter-spacing:0.30px">31&#x27;13&quot;</span>
<span class="tx" style="left:116.26px;letter-spacing:-0.08px">1</span>
<span class="tx" style="left:137.17px;letter-spacing:0.34px">/home</span><span class="tx" style="left:179.18px;letter-spacing:0.35px">/fabien</span><span class="tx" style="left:225.18px;letter-spacing:0.35px">/data</span><span class="tx" style="left:259.19px;letter-spacing:0.38px">/muzak</span><span class="tx" style="left:308.12px;letter-spacing:0.24px">/franco</span><span class="tx" style="left:354.11px;letter-spacing:0.22px">/Noir </span><span class="tx" style="left:390.02px;letter-spacing:0.03px">Desir</span><span class="tx" style="left:423.98px;letter-spacing:-0.05px">/Le </span><span class="tx" style="left:448.16px;letter-spacing:0.31px">vent </span><span class="tx" style="left:480.95px;letter-spacing:-0.10px">nous </span><span class="tx" style="left:516.08px;letter-spacing:0.16px">portera.mp3</span>
</div>
<div class="row" style="top:404px;height:23px;overflow:hidden;">
<div class="c" style="left:0;width:52px;background:#F5FF00;"></div>
<span class="tx" style="left:4.07px;letter-spacing:-0.07px">101</span>
<span class="tx" style="left:56.35px;letter-spacing:0.30px">35&#x27;27&quot;</span>
<span class="tx" style="left:116.26px;letter-spacing:-0.08px">1</span>
<span class="tx" style="left:137.17px;letter-spacing:0.34px">/home</span><span class="tx" style="left:179.18px;letter-spacing:0.35px">/fabien</span><span class="tx" style="left:225.18px;letter-spacing:0.35px">/data</span><span class="tx" style="left:259.19px;letter-spacing:0.38px">/muzak</span><span class="tx" style="left:308.11px;letter-spacing:0.22px">/cd</span><span class="tx" style="left:328.16px;letter-spacing:0.32px">/rock</span><span class="tx" style="left:361.00px;letter-spacing:-0.01px">/The </span><span class="tx" style="left:393.96px;letter-spacing:-0.08px">Police</span><span class="tx" style="left:432.95px;letter-spacing:-0.10px">/Message </span><span class="tx" style="left:498.98px;letter-spacing:-0.04px">In </span><span class="tx" style="left:515.02px;letter-spacing:0.05px">A </span><span class="tx" style="left:528.00px;letter-spacing:-0.00px">Box </span><span class="tx" style="left:557.04px;letter-spacing:0.07px">- </span><span class="tx" style="left:565.87px;letter-spacing:-0.25px">The </span><span class="tx" style="left:594.05px;letter-spacing:0.10px">Complete </span><span class="tx" style="left:660.94px;letter-spacing:-0.12px">Recordings </span><span class="tx" style="left:736.99px;letter-spacing:-0.01px">(Disc </span><span class="tx" style="left:774.02px;letter-spacing:0.05px">2)</span><span class="tx" style="left:787.10px;letter-spacing:0.20px">/07 </span><span class="tx" style="left:812.04px;letter-spacing:0.07px">- </span><span class="tx" style="left:821.01px;letter-spacing:0.02px">Bring </span><span class="tx" style="left:858.77px;letter-spacing:-0.46px">On </span><span class="tx" style="left:880.87px;letter-spacing:-0.25px">The </span><span class="tx" style="left:909.05px;letter-spacing:0.10px">Night.ogg</span>
</div>
<div class="row" style="top:427px;height:23px;overflow:hidden;">
<div class="c" style="left:0;width:52px;background:#FFFF00;"></div>
<span class="tx" style="left:4.07px;letter-spacing:-0.07px">100</span>
<span class="tx" style="left:56.35px;letter-spacing:0.30px">35&#x27;27&quot;</span>
<span class="tx" style="left:116.26px;letter-spacing:-0.08px">1</span>
<span class="tx" style="left:137.17px;letter-spacing:0.34px">/home</span><span class="tx" style="left:179.18px;letter-spacing:0.35px">/fabien</span><span class="tx" style="left:225.18px;letter-spacing:0.35px">/data</span><span class="tx" style="left:259.19px;letter-spacing:0.38px">/muzak</span><span class="tx" style="left:308.11px;letter-spacing:0.22px">/cd</span><span class="tx" style="left:328.16px;letter-spacing:0.32px">/rock</span><span class="tx" style="left:361.00px;letter-spacing:-0.01px">/The </span><span class="tx" style="left:393.96px;letter-spacing:-0.08px">Police</span><span class="tx" style="left:432.95px;letter-spacing:-0.10px">/Message </span><span class="tx" style="left:498.98px;letter-spacing:-0.04px">In </span><span class="tx" style="left:515.02px;letter-spacing:0.05px">A </span><span class="tx" style="left:528.00px;letter-spacing:-0.00px">Box </span><span class="tx" style="left:557.04px;letter-spacing:0.07px">- </span><span class="tx" style="left:565.87px;letter-spacing:-0.25px">The </span><span class="tx" style="left:594.05px;letter-spacing:0.10px">Complete </span><span class="tx" style="left:552.64px;letter-spacing:-0.12px">Recordings </span><span class="tx" style="left:628.69px;letter-spacing:-0.01px">(Disc </span><span class="tx" style="left:665.72px;letter-spacing:0.05px">4)</span><span class="tx" style="left:678.80px;letter-spacing:0.20px">/05 </span><span class="tx" style="left:703.74px;letter-spacing:0.07px">- </span><span class="tx" style="left:712.77px;letter-spacing:0.14px">Tea </span><span class="tx" style="left:740.68px;letter-spacing:-0.04px">In </span><span class="tx" style="left:756.57px;letter-spacing:-0.25px">The </span><span class="tx" style="left:784.57px;letter-spacing:-0.26px">Sahara </span><span class="tx" style="left:833.59px;letter-spacing:-0.21px">And </span><span class="tx" style="left:862.59px;letter-spacing:-0.22px">More </span><span class="tx" style="left:898.64px;letter-spacing:-0.11px">Of </span><span class="tx" style="left:917.85px;letter-spacing:0.30px">It </span><span class="tx" style="left:930.81px;letter-spacing:0.21px">All </span><span class="tx" style="left:951.75px;letter-spacing:0.10px">Live</span><span class="tx" style="left:980.17px;letter-spacing:-0.06px">.ogg</span>
</div>
<div class="row" style="top:450px;height:23px;overflow:hidden;">
<div class="c" style="left:0;width:52px;background:#5CFF00;"></div>
<span class="tx" style="left:4.25px;letter-spacing:0.29px">116</span>
<span class="tx" style="left:56.35px;letter-spacing:0.30px">41&#x27;59&quot;</span>
<span class="tx" style="left:116.26px;letter-spacing:-0.08px">1</span>
<span class="tx" style="left:137.17px;letter-spacing:0.34px">/home</span><span class="tx" style="left:179.18px;letter-spacing:0.35px">/fabien</span><span class="tx" style="left:225.18px;letter-spacing:0.35px">/data</span><span class="tx" style="left:259.19px;letter-spacing:0.38px">/muzak</span><span class="tx" style="left:308.12px;letter-spacing:0.23px">/jazz</span><span class="tx" style="left:339.06px;letter-spacing:0.13px">/Coltrane</span><span class="tx" style="left:399.08px;letter-spacing:0.15px">/Blue </span><span class="tx" style="left:437.05px;letter-spacing:0.10px">Train</span><span class="tx" style="left:470.10px;letter-spacing:0.20px">/01 </span><span class="tx" style="left:495.04px;letter-spacing:0.07px">- </span><span class="tx" style="left:503.99px;letter-spacing:-0.01px">Blue </span><span class="tx" style="left:537.02px;letter-spacing:0.03px">Train.ogg</span>
</div>
<div class="row" style="top:473px;height:23px;overflow:hidden;">
<div class="c" style="left:0;width:52px;background:#E0FF00;"></div>
<span class="tx" style="left:4.07px;letter-spacing:-0.07px">103</span>
<span class="tx" style="left:56.35px;letter-spacing:0.30px">44&#x27;58&quot;</span>
<span class="tx" style="left:116.26px;letter-spacing:-0.08px">1</span>
<span class="tx" style="left:137.17px;letter-spacing:0.34px">/home</span><span class="tx" style="left:179.18px;letter-spacing:0.35px">/fabien</span><span class="tx" style="left:225.18px;letter-spacing:0.35px">/data</span><span class="tx" style="left:259.19px;letter-spacing:0.38px">/muzak</span><span class="tx" style="left:308.11px;letter-spacing:0.22px">/cd</span><span class="tx" style="left:328.16px;letter-spacing:0.32px">/rock</span><span class="tx" style="left:361.00px;letter-spacing:-0.01px">/The </span><span class="tx" style="left:393.96px;letter-spacing:-0.08px">Police</span><span class="tx" style="left:432.95px;letter-spacing:-0.10px">/Message </span><span class="tx" style="left:498.98px;letter-spacing:-0.04px">In </span><span class="tx" style="left:515.02px;letter-spacing:0.05px">A </span><span class="tx" style="left:528.00px;letter-spacing:-0.00px">Box </span><span class="tx" style="left:557.04px;letter-spacing:0.07px">- </span><span class="tx" style="left:565.87px;letter-spacing:-0.25px">The </span><span class="tx" style="left:594.05px;letter-spacing:0.10px">Complete </span><span class="tx" style="left:660.54px;letter-spacing:-0.12px">Recordings </span><span class="tx" style="left:736.59px;letter-spacing:-0.01px">(Disc </span><span class="tx" style="left:773.62px;letter-spacing:0.05px">3)</span><span class="tx" style="left:786.70px;letter-spacing:0.20px">/03 </span><span class="tx" style="left:811.64px;letter-spacing:0.07px">- </span><span class="tx" style="left:820.64px;letter-spacing:0.08px">Spirits </span><span class="tx" style="left:865.58px;letter-spacing:-0.04px">In </span><span class="tx" style="left:881.47px;letter-spacing:-0.25px">The </span><span class="tx" style="left:909.68px;letter-spacing:0.15px">Material </span><span class="tx" style="left:966.26px;letter-spacing:-0.69px">W</span><span class="tx" style="left:981.14px;letter-spacing:0.07px">orld.ogg</span>
</div>
<div class="row" style="top:496px;height:23px;overflow:hidden;">
<div class="c" style="left:0;width:52px;background:#C2FF00;"></div>
<span class="tx" style="left:4.07px;letter-spacing:-0.07px">106</span>
<span class="tx" style="left:56.35px;letter-spacing:0.30px">49&#x27;17&quot;</span>
<span class="tx" style="left:116.26px;letter-spacing:-0.08px">2</span>
<span class="tx" style="left:137.17px;letter-spacing:0.34px">/home</span><span class="tx" style="left:179.18px;letter-spacing:0.35px">/fabien</span><span class="tx" style="left:225.18px;letter-spacing:0.35px">/gnutella</span><span class="tx" style="left:282.84px;letter-spacing:-0.33px">/OK</span><span class="tx" style="left:307.02px;letter-spacing:0.04px">/songs</span><span class="tx" style="left:350.10px;letter-spacing:0.19px">/pop</span><span class="tx" style="left:378.97px;letter-spacing:-0.06px">/Madonna </span><span class="tx" style="left:447.04px;letter-spacing:0.07px">- </span><span class="tx" style="left:455.93px;letter-spacing:-0.14px">Frozen.mp3</span>
</div>
<div class="row" style="top:519px;height:23px;overflow:hidden;">
<div class="c" style="left:0;width:52px;background:#ADFF00;"></div>
<span class="tx" style="left:4.07px;letter-spacing:-0.07px">108</span>
<span class="tx" style="left:56.35px;letter-spacing:0.30px">53&#x27;32&quot;</span>
<span class="tx" style="left:116.26px;letter-spacing:-0.08px">1</span>
<span class="tx" style="left:137.17px;letter-spacing:0.34px">/home</span><span class="tx" style="left:179.18px;letter-spacing:0.35px">/fabien</span><span class="tx" style="left:225.18px;letter-spacing:0.35px">/data</span><span class="tx" style="left:259.19px;letter-spacing:0.38px">/muzak</span><span class="tx" style="left:308.11px;letter-spacing:0.22px">/cd</span><span class="tx" style="left:328.16px;letter-spacing:0.32px">/rock</span><span class="tx" style="left:361.00px;letter-spacing:-0.01px">/The </span><span class="tx" style="left:393.96px;letter-spacing:-0.08px">Police</span><span class="tx" style="left:432.95px;letter-spacing:-0.10px">/Message </span><span class="tx" style="left:498.98px;letter-spacing:-0.04px">In </span><span class="tx" style="left:515.02px;letter-spacing:0.05px">A </span><span class="tx" style="left:528.00px;letter-spacing:-0.00px">Box </span><span class="tx" style="left:557.04px;letter-spacing:0.07px">- </span><span class="tx" style="left:565.87px;letter-spacing:-0.25px">The </span><span class="tx" style="left:594.05px;letter-spacing:0.10px">Complete </span><span class="tx" style="left:660.94px;letter-spacing:-0.12px">Recordings </span><span class="tx" style="left:736.99px;letter-spacing:-0.01px">(Disc </span><span class="tx" style="left:774.02px;letter-spacing:0.05px">1)</span><span class="tx" style="left:787.10px;letter-spacing:0.20px">/09 </span><span class="tx" style="left:812.04px;letter-spacing:0.07px">- </span><span class="tx" style="left:820.94px;letter-spacing:-0.12px">Roxanne.ogg</span>
</div>
<div class="row" style="top:542px;height:23px;overflow:hidden;">
<div class="c" style="left:0;width:52px;background:#52FF00;"></div>
<span class="tx" style="left:4.25px;letter-spacing:0.29px">117</span>
<span class="tx" style="left:56.35px;letter-spacing:0.30px">56&#x27;21&quot;</span>
<span class="tx" style="left:116.26px;letter-spacing:-0.08px">2</span>
<span class="tx" style="left:137.17px;letter-spacing:0.34px">/home</span><span class="tx" style="left:179.18px;letter-spacing:0.35px">/fabien</span><span class="tx" style="left:225.18px;letter-spacing:0.35px">/data</span><span class="tx" style="left:259.19px;letter-spacing:0.38px">/muzak</span><span class="tx" style="left:308.12px;letter-spacing:0.24px">/franco</span><span class="tx" style="left:354.02px;letter-spacing:0.04px">/Leloup, </span><span class="tx" style="left:409.57px;letter-spacing:-0.86px">Jean</span><span class="tx" style="left:437.98px;letter-spacing:-0.05px">/Le </span><span class="tx" style="left:462.09px;letter-spacing:0.18px">dome</span><span class="tx" style="left:499.10px;letter-spacing:0.20px">/03 </span><span class="tx" style="left:524.04px;letter-spacing:0.07px">- </span><span class="tx" style="left:532.98px;letter-spacing:-0.03px">I </span><span class="tx" style="left:541.14px;letter-spacing:0.28px">lost </span><span class="tx" style="left:569.27px;letter-spacing:0.55px">my </span><span class="tx" style="left:594.09px;letter-spacing:0.18px">baby.ogg</span>
</div>
<div class="row" style="top:565px;height:23px;overflow:hidden;">
<div class="c" style="left:0;width:52px;background:#C2FF00;"></div>
<span class="tx" style="left:4.07px;letter-spacing:-0.07px">106</span>
<span class="tx" style="left:56.17px;letter-spacing:-0.07px">1h00</span>
<span class="tx" style="left:116.26px;letter-spacing:-0.08px">1</span>
<span class="tx" style="left:137.17px;letter-spacing:0.34px">/home</span><span class="tx" style="left:179.18px;letter-spacing:0.35px">/fabien</span><span class="tx" style="left:225.18px;letter-spacing:0.35px">/data</span><span class="tx" style="left:259.19px;letter-spacing:0.38px">/muzak</span><span class="tx" style="left:308.11px;letter-spacing:0.22px">/cd</span><span class="tx" style="left:328.08px;letter-spacing:0.15px">/classique</span><span class="tx" style="left:394.07px;letter-spacing:0.13px">/Albeniz, </span><span class="tx" style="left:454.93px;letter-spacing:-0.13px">Isaac</span><span class="tx" style="left:489.06px;letter-spacing:0.13px">/Suite </span><span class="tx" style="left:530.92px;letter-spacing:-0.17px">Espanola </span><span class="tx" style="left:593.82px;letter-spacing:-0.35px">Op. </span><span class="tx" style="left:684.67px;letter-spacing:-0.06px">47 </span><span class="tx" style="left:704.74px;letter-spacing:0.07px">- </span><span class="tx" style="left:713.73px;letter-spacing:0.07px">Guitar </span><span class="tx" style="left:757.72px;letter-spacing:0.03px">Works</span><span class="tx" style="left:798.80px;letter-spacing:0.20px">/05 </span><span class="tx" style="left:823.74px;letter-spacing:0.07px">- </span><span class="tx" style="left:832.73px;letter-spacing:0.06px">Asturias </span><span class="tx" style="left:889.66px;letter-spacing:-0.08px">Leyenda </span><span class="tx" style="left:948.59px;letter-spacing:-0.22px">Anda</span><span class="tx" style="left:983.21px;letter-spacing:0.02px">luza.ogg</span>
</div>
<div class="row" style="top:588px;height:23px;overflow:hidden;">
<div class="c" style="left:0;width:52px;background:#C2FF00;"></div>
<span class="tx" style="left:4.07px;letter-spacing:-0.07px">106</span>
<span class="tx" style="left:56.17px;letter-spacing:-0.07px">1h04</span>
<span class="tx" style="left:116.26px;letter-spacing:-0.08px">1</span>
<span class="tx" style="left:137.17px;letter-spacing:0.34px">/home</span><span class="tx" style="left:179.18px;letter-spacing:0.35px">/fabien</span><span class="tx" style="left:225.18px;letter-spacing:0.35px">/data</span><span class="tx" style="left:259.19px;letter-spacing:0.38px">/muzak</span><span class="tx" style="left:308.11px;letter-spacing:0.22px">/cd</span><span class="tx" style="left:328.16px;letter-spacing:0.32px">/rock</span><span class="tx" style="left:361.00px;letter-spacing:-0.01px">/The </span><span class="tx" style="left:393.96px;letter-spacing:-0.08px">Police</span><span class="tx" style="left:432.95px;letter-spacing:-0.10px">/Message </span><span class="tx" style="left:498.98px;letter-spacing:-0.04px">In </span><span class="tx" style="left:515.02px;letter-spacing:0.05px">A </span><span class="tx" style="left:528.00px;letter-spacing:-0.00px">Box </span><span class="tx" style="left:557.04px;letter-spacing:0.07px">- </span><span class="tx" style="left:565.87px;letter-spacing:-0.25px">The </span><span class="tx" style="left:594.05px;letter-spacing:0.10px">Complete </span><span class="tx" style="left:660.94px;letter-spacing:-0.12px">Recordings </span><span class="tx" style="left:736.99px;letter-spacing:-0.01px">(Disc </span><span class="tx" style="left:774.02px;letter-spacing:0.05px">3)</span><span class="tx" style="left:787.10px;letter-spacing:0.20px">/01 </span><span class="tx" style="left:812.04px;letter-spacing:0.07px">- </span><span class="tx" style="left:821.13px;letter-spacing:0.26px">Invisible </span><span class="tx" style="left:879.85px;letter-spacing:-0.29px">Sun.ogg</span>
</div>
<div class="row" style="top:611px;height:23px;overflow:hidden;">
<div class="c" style="left:0;width:52px;background:#E0FF00;"></div>
<span class="tx" style="left:4.07px;letter-spacing:-0.07px">103</span>
<span class="tx" style="left:56.17px;letter-spacing:-0.07px">1h07</span>
<span class="tx" style="left:116.26px;letter-spacing:-0.08px">1</span>
<span class="tx" style="left:137.17px;letter-spacing:0.34px">/home</span><span class="tx" style="left:179.18px;letter-spacing:0.35px">/fabien</span><span class="tx" style="left:225.18px;letter-spacing:0.35px">/data</span><span class="tx" style="left:259.19px;letter-spacing:0.38px">/muzak</span><span class="tx" style="left:308.11px;letter-spacing:0.22px">/cd</span><span class="tx" style="left:328.16px;letter-spacing:0.32px">/rock</span><span class="tx" style="left:361.00px;letter-spacing:-0.01px">/The </span><span class="tx" style="left:393.96px;letter-spacing:-0.08px">Police</span><span class="tx" style="left:432.95px;letter-spacing:-0.10px">/Message </span><span class="tx" style="left:498.98px;letter-spacing:-0.04px">In </span><span class="tx" style="left:515.02px;letter-spacing:0.05px">A </span><span class="tx" style="left:528.00px;letter-spacing:-0.00px">Box </span><span class="tx" style="left:557.04px;letter-spacing:0.07px">- </span><span class="tx" style="left:565.87px;letter-spacing:-0.25px">The </span><span class="tx" style="left:594.05px;letter-spacing:0.10px">Complete </span><span class="tx" style="left:660.94px;letter-spacing:-0.12px">Recordings </span><span class="tx" style="left:736.99px;letter-spacing:-0.01px">(Disc </span><span class="tx" style="left:774.02px;letter-spacing:0.05px">2)</span><span class="tx" style="left:787.10px;letter-spacing:0.20px">/12 </span><span class="tx" style="left:812.04px;letter-spacing:0.07px">- </span><span class="tx" style="left:821.01px;letter-spacing:0.01px">Canary.ogg</span>
</div>
<div class="row" style="top:634px;height:23px;overflow:hidden;">
<div class="c" style="left:0;width:52px;background:#FFE000;"></div>
<span class="tx" style="left:4.06px;letter-spacing:-0.07px">97</span>
<span class="tx" style="left:56.17px;letter-spacing:-0.07px">1h16</span>
<span class="tx" style="left:116.26px;letter-spacing:-0.08px">1</span>
<span class="tx" style="left:137.17px;letter-spacing:0.34px">/home</span><span class="tx" style="left:179.18px;letter-spacing:0.35px">/fabien</span><span class="tx" style="left:225.18px;letter-spacing:0.35px">/data</span><span class="tx" style="left:259.19px;letter-spacing:0.38px">/muzak</span><span class="tx" style="left:308.10px;letter-spacing:0.19px">/pop</span><span class="tx" style="left:337.05px;letter-spacing:0.10px">/Moby</span><span class="tx" style="left:377.07px;letter-spacing:0.15px">/Play</span><span class="tx" style="left:410.05px;letter-spacing:0.09px">/Porcelain.mp3</span>
</div>
<div class="row" style="top:657px;height:23px;overflow:hidden;">
<div class="c" style="left:0;width:52px;background:#E0FF00;"></div>
<span class="tx" style="left:4.07px;letter-spacing:-0.07px">103</span>
<span class="tx" style="left:56.17px;letter-spacing:-0.07px">1h19</span>
<span class="tx" style="left:116.26px;letter-spacing:-0.08px">1</span>
<span class="tx" style="left:137.18px;letter-spacing:0.36px">/home</span><span class="tx" style="left:179.27px;letter-spacing:0.36px">/fabien</span><span class="tx" style="left:225.37px;letter-spacing:0.36px">/data</span><span class="tx" style="left:259.45px;letter-spacing:0.39px">/muzak</span><span class="tx" style="left:308.48px;letter-spacing:0.23px">/cd</span><span class="tx" style="left:328.57px;letter-spacing:0.33px">/rock</span><span class="tx" style="left:361.47px;letter-spacing:0.00px">/The </span><span class="tx" style="left:394.51px;letter-spacing:-0.07px">Police</span><span class="tx" style="left:433.58px;letter-spacing:-0.09px">/Message </span><span class="tx" style="left:499.75px;letter-spacing:-0.03px">In </span><span class="tx" style="left:515.83px;letter-spacing:0.06px">A </span><span class="tx" style="left:528.83px;letter-spacing:0.01px">Box </span><span class="tx" style="left:557.93px;letter-spacing:0.08px">- </span><span class="tx" style="left:566.79px;letter-spacing:-0.24px">The </span><span class="tx" style="left:595.02px;letter-spacing:0.12px">Complete </span><span class="tx" style="left:662.05px;letter-spacing:-0.11px">Recordings </span><span class="tx" style="left:738.27px;letter-spacing:0.00px">(Disc </span><span class="tx" style="left:775.37px;letter-spacing:0.06px">2)</span><span class="tx" style="left:788.48px;letter-spacing:0.22px">/10 </span><span class="tx" style="left:813.46px;letter-spacing:0.08px">- </span><span class="tx" style="left:822.38px;letter-spacing:-0.13px">Friends.ogg</span>
</div>
<div class="row" style="top:680px;height:23px;overflow:hidden;">
<div class="c" style="left:0;width:52px;background:#E0FF00;"></div>
<span class="tx" style="left:4.07px;letter-spacing:-0.07px">103</span>
<span class="tx" style="left:56.17px;letter-spacing:-0.07px">1h21</span>
<span class="tx" style="left:116.26px;letter-spacing:-0.08px">1</span>
<span class="tx" style="left:137.18px;letter-spacing:0.37px">/home</span><span class="tx" style="left:179.33px;letter-spacing:0.37px">/fabien</span><span class="tx" style="left:225.49px;letter-spacing:0.37px">/data</span><span class="tx" style="left:259.62px;letter-spacing:0.40px">/muzak</span><span class="tx" style="left:308.71px;letter-spacing:0.24px">/cd</span><span class="tx" style="left:328.83px;letter-spacing:0.34px">/rock</span><span class="tx" style="left:361.78px;letter-spacing:0.01px">/The </span><span class="tx" style="left:394.85px;letter-spacing:-0.06px">Police</span><span class="tx" style="left:433.98px;letter-spacing:-0.08px">/Message </span><span class="tx" style="left:500.23px;letter-spacing:-0.02px">In </span><span class="tx" style="left:516.33px;letter-spacing:0.07px">A </span><span class="tx" style="left:529.35px;letter-spacing:0.01px">Box: </span><span class="tx" style="left:562.34px;letter-spacing:-0.23px">The </span><span class="tx" style="left:590.62px;letter-spacing:0.13px">Complete </span><span class="tx" style="left:657.73px;letter-spacing:-0.10px">Recordings </span><span class="tx" style="left:734.05px;letter-spacing:0.01px">(Disc </span><span class="tx" style="left:771.21px;letter-spacing:0.07px">1)</span><span class="tx" style="left:784.33px;letter-spacing:0.22px">/01 </span><span class="tx" style="left:809.35px;letter-spacing:0.09px">- </span><span class="tx" style="left:818.30px;letter-spacing:-0.06px">Fall </span><span class="tx" style="left:845.40px;letter-spacing:-0.06px">Out.ogg</span>
</div>
<div class="row" style="top:703px;height:23px;overflow:hidden;">
<div class="c" style="left:0;width:52px;background:#85FF00;"></div>
<span class="tx" style="left:4.25px;letter-spacing:0.29px">112</span>
<span class="tx" style="left:56.17px;letter-spacing:-0.07px">1h24</span>
<span class="tx" style="left:116.26px;letter-spacing:-0.08px">1</span>
<span class="tx" style="left:137.19px;letter-spacing:0.37px">/home</span><span class="tx" style="left:179.36px;letter-spacing:0.38px">/fabien</span><span class="tx" style="left:225.55px;letter-spacing:0.38px">/data</span><span class="tx" style="left:259.71px;letter-spacing:0.41px">/muzak</span><span class="tx" style="left:308.84px;letter-spacing:0.26px">/franco</span><span class="tx" style="left:354.67px;letter-spacing:-0.46px">/Joe </span><span class="tx" style="left:384.01px;letter-spacing:-0.02px">Dassin</span><span class="tx" style="left:428.38px;letter-spacing:0.36px">/Vive </span><span class="tx" style="left:466.55px;letter-spacing:0.38px">moi.mp3</span>
</div>
<div class="row" style="top:726px;height:18px;overflow:hidden;">
<div class="c" style="left:0;width:52px;background:#D6FF00;"></div>
<span class="tx" style="left:4.07px;letter-spacing:-0.07px">104</span>
<span class="tx" style="left:56.17px;letter-spacing:-0.07px">1h28</span>
<span class="tx" style="left:116.26px;letter-spacing:-0.08px">2</span>
<span class="tx" style="left:137.17px;letter-spacing:0.35px">/home</span><span class="tx" style="left:179.23px;letter-spacing:0.36px">/fabien</span><span class="tx" style="left:225.29px;letter-spacing:0.36px">/gnutella</span><span class="tx" style="left:283.02px;letter-spacing:-0.32px">/OK</span><span class="tx" style="left:307.24px;letter-spacing:0.05px">/songs</span><span class="tx" style="left:350.36px;letter-spacing:0.19px">/soundtrack</span><span class="tx" style="left:427.28px;letter-spacing:-0.16px">/LastOfTheMohicans_OST.mp3</span>
</div>
<div style="left:1131px;top:78px;width:17px;height:666px;background:#C5C2A3;border:1px solid #8C8A73;border-right:0;border-bottom:0"></div>
<div class="btn" style="left:1132px;top:79px;width:16px;height:16px;"></div>
<svg style="left:1135px;top:83px" width="8" height="4"><path d="M0 4 L3.5 0 L7 4 Z"/></svg>
<div class="btn" style="left:1132px;top:96px;width:16px;height:29px;"></div>
<div style="left:1135px;top:106px;width:8px;height:2px;background:#fff;border-top:1px solid #B4B295;"></div>
<div style="left:1135px;top:109px;width:8px;height:2px;background:#fff;border-top:1px solid #B4B295;"></div>
<div style="left:1135px;top:112px;width:8px;height:2px;background:#fff;border-top:1px solid #B4B295;"></div>
<div class="btn" style="left:1132px;top:728px;width:16px;height:16px;"></div>
<svg style="left:1135px;top:733px" width="8" height="4"><path d="M0 0 L3.5 4 L7 0 Z"/></svg>
<div style="left:4px;top:747px;width:1124px;height:17px;background:#C5C2A3;border:1px solid #8C8A73;border-right:0;border-bottom:0"></div>
<div class="btn" style="left:5px;top:748px;width:16px;height:16px;"></div>
<svg style="left:9px;top:751px" width="4" height="8"><path d="M4 0 L0 3.5 L4 7 Z"/></svg>
<div class="btn" style="left:22px;top:748px;width:894px;height:16px;"></div>
<div style="left:465px;top:752px;width:2px;height:8px;background:#fff;border-left:1px solid #B4B295;"></div>
<div style="left:468px;top:752px;width:2px;height:8px;background:#fff;border-left:1px solid #B4B295;"></div>
<div style="left:471px;top:752px;width:2px;height:8px;background:#fff;border-left:1px solid #B4B295;"></div>
<div class="btn" style="left:1112px;top:748px;width:16px;height:16px;"></div>
<svg style="left:1117px;top:751px" width="4" height="8"><path d="M0 0 L4 3.5 L0 7 Z"/></svg>
<div id="gp" style="left:336px;top:179px;width:648px;height:477px;background:#000;border-radius:6px 6px 0 0;"></div>
<div style="left:337px;top:180px;width:646px;height:475px;background:#43608F;border-radius:5px 5px 0 0;"></div>
<div style="left:342px;top:180px;width:636px;height:1px;background:#5E7BA8;"></div>
<div style="left:339px;top:201px;width:642px;height:452px;background:#000;"></div>
<div style="left:340px;top:202px;width:640px;height:450px;background:#fff;"></div>
<div class="t" style="left:441px;top:180px;width:400px;text-align:center;color:#fff;line-height:21px;height:21px;text-shadow:1px 1px 0 #000;letter-spacing:0.28px;" id="gptitle">Gnuplot</div>
<svg style="left:342.2px;top:182.8px" width="16" height="17" viewBox="0 0 16 17"><defs><linearGradient id="gwi342" x1="0" y1="0" x2="1" y2="1"><stop offset="0" stop-color="#FFFFFF"/><stop offset="0.5" stop-color="#F4F4F2"/><stop offset="1" stop-color="#CFCFCB"/></linearGradient></defs><path d="M0.8 0.7 H11.6 L14.6 3.8 V15.4 H0.8 Z" fill="url(#gwi342)" stroke="#3A3A3A" stroke-width="0.8"/><path d="M11.6 0.7 V3.8 H14.6" fill="#E6E6E2" stroke="#555" stroke-width="0.7"/></svg><svg style="left:920px;top:180px" width="60" height="21" viewBox="920 180 60 21" shape-rendering="crispEdges"><rect x="924" y="197" width="14" height="2" fill="#52709E"/><path d="M943 182h17v17h-17z M944 185v13h15v-13z" fill="#52709E" fill-rule="evenodd"/><path d="M963.5 183.5 L977.5 197.5 M977.5 183.5 L963.5 197.5" stroke="#52709E" stroke-width="1.6" fill="none" shape-rendering="auto"/></svg>
<svg style="left:0;top:0" width="1152" height="768" shape-rendering="crispEdges">
<path d="M389 254h566v2h-566zM389 615h566v2h-566zM389 254h2v363h-2zM953 254h2v363h-2zM459 256h2v4h-2zM459 611h2v4h-2zM530 256h2v4h-2zM530 611h2v4h-2zM600 256h2v4h-2zM600 611h2v4h-2zM671 256h2v4h-2zM671 611h2v4h-2zM741 256h2v4h-2zM741 611h2v4h-2zM812 256h2v4h-2zM812 611h2v4h-2zM883 256h2v4h-2zM883 611h2v4h-2zM391 579h3v2h-3zM950 579h3v2h-3zM391 543h3v2h-3zM950 543h3v2h-3zM391 506h3v2h-3zM950 506h3v2h-3zM391 470h3v2h-3zM950 470h3v2h-3zM391 434h3v2h-3zM950 434h3v2h-3zM391 398h3v2h-3zM950 398h3v2h-3zM391 362h3v2h-3zM950 362h3v2h-3zM391 326h3v2h-3zM950 326h3v2h-3zM391 290h3v2h-3zM950 290h3v2h-3z" fill="#000"/>
<path d="M389 254h1v1h-1zM954 254h1v1h-1zM389 616h1v1h-1zM954 616h1v1h-1z" fill="#fff"/>
<path d="M425 608h1V616h-1zM446 605h1V616h-1zM453 608h1V616h-1zM467 612h1V616h-1zM474 608h1V616h-1zM481 605h1V616h-1zM488 605h1V616h-1zM495 608h1V616h-1zM503 587h1V616h-1zM510 583h1V616h-1zM517 590h1V616h-1zM524 608h1V616h-1zM531 587h1V616h-1zM538 598h1V616h-1zM545 565h1V616h-1zM552 558h1V616h-1zM559 572h1V616h-1zM566 540h1V616h-1zM573 554h1V616h-1zM580 529h1V616h-1zM587 544h1V616h-1zM594 511h1V616h-1zM601 489h1V616h-1zM608 475h1V616h-1zM615 493h1V616h-1zM622 262h1V616h-1zM630 453h1V616h-1zM637 507h1V616h-1zM644 327h1V616h-1zM651 453h1V616h-1zM658 511h1V616h-1zM665 425h1V616h-1zM672 486h1V616h-1zM679 536h1V616h-1zM686 536h1V616h-1zM693 522h1V616h-1zM700 580h1V616h-1zM707 583h1V616h-1zM714 551h1V616h-1zM721 576h1V616h-1zM728 605h1V616h-1zM735 594h1V616h-1zM742 601h1V616h-1zM750 608h1V616h-1zM757 601h1V616h-1zM764 608h1V616h-1zM771 601h1V616h-1zM778 608h1V616h-1zM862 612h1V616h-1zM919 612h1V616h-1zM947 612h1V616h-1zM954 608h1V616h-1z" fill="#FF0000"/>
<polyline points="425.5,608.5 426.5,609.5 428.5,609.5 430.5,612.5 443.5,612.5 444.5,611.5 454.5,611.5 455.5,610.5 463.9,610.3 468.1,609.4 475.2,607.2 482.2,604.7 489.3,602.2 496.4,600.0 503.4,597.5 510.5,594.3 517.5,591.0 524.6,587.4 531.6,583.8 538.7,578.4 545.7,572.3 552.8,564.4 559.9,555.7 566.9,545.7 574.0,535.2 581.0,524.1 588.1,512.2 595.1,500.3 602.2,488.8 609.3,477.6 616.3,468.3 623.4,461.8 630.4,457.8 633.9,457.1 637.5,457.6 644.5,460.7 651.6,466.5 658.6,475.1 665.7,484.5 672.8,496.0 679.8,508.2 686.9,520.5 693.9,532.3 701.0,543.9 708.0,554.7 715.1,564.7 722.1,574.1 729.2,582.0 736.3,588.5 743.3,593.9 750.4,598.6 757.4,602.2 764.5,605.1 771.5,607.2 778.6,609.4 785.7,611.2 792.7,612.5 803.3,613.5 813.9,614.5 822.3,615.5 929.6,615.5 931.7,614.5 942.3,614.5 944.4,613.5 947.9,612.4 951.5,610.8 955.0,608.5" fill="none" stroke="#00FF00" stroke-width="1"/>
<path d="M630 226h1v1h-1zM632 226h2v1h-2zM630 227h2v1h-2zM634 227h1v1h-1zM630 228h1v1h-1zM630 229h1v1h-1zM630 230h1v1h-1zM630 231h1v1h-1zM637 226h3v1h-3zM640 227h1v1h-1zM637 228h4v1h-4zM636 229h1v1h-1zM640 229h1v1h-1zM636 230h1v1h-1zM640 230h1v1h-1zM637 231h4v1h-4zM643 224h1v1h-1zM643 225h1v1h-1zM642 226h4v1h-4zM643 227h1v1h-1zM643 228h1v1h-1zM643 229h1v1h-1zM643 230h1v1h-1zM646 230h1v1h-1zM644 231h2v1h-2zM649 226h3v1h-3zM648 227h1v1h-1zM652 227h1v1h-1zM648 228h5v1h-5zM648 229h1v1h-1zM648 230h1v1h-1zM652 230h1v1h-1zM649 231h3v1h-3zM662 223h3v1h-3zM661 224h1v1h-1zM664 224h1v1h-1zM661 225h1v1h-1zM661 226h1v1h-1zM660 227h4v1h-4zM661 228h1v1h-1zM661 229h1v1h-1zM661 230h1v1h-1zM661 231h1v1h-1zM666 226h1v1h-1zM668 226h2v1h-2zM666 227h2v1h-2zM670 227h1v1h-1zM666 228h1v1h-1zM666 229h1v1h-1zM666 230h1v1h-1zM666 231h1v1h-1zM673 226h3v1h-3zM672 227h1v1h-1zM676 227h1v1h-1zM672 228h5v1h-5zM672 229h1v1h-1zM672 230h1v1h-1zM676 230h1v1h-1zM673 231h3v1h-3zM679 226h4v1h-4zM678 227h1v1h-1zM682 227h1v1h-1zM678 228h1v1h-1zM682 228h1v1h-1zM678 229h1v1h-1zM682 229h1v1h-1zM679 230h4v1h-4zM682 231h1v1h-1zM682 232h1v1h-1zM682 233h1v1h-1zM684 226h1v1h-1zM688 226h1v1h-1zM684 227h1v1h-1zM688 227h1v1h-1zM684 228h1v1h-1zM688 228h1v1h-1zM684 229h1v1h-1zM688 229h1v1h-1zM684 230h1v1h-1zM687 230h2v1h-2zM685 231h2v1h-2zM688 231h1v1h-1zM691 226h3v1h-3zM690 227h1v1h-1zM694 227h1v1h-1zM690 228h5v1h-5zM690 229h1v1h-1zM690 230h1v1h-1zM694 230h1v1h-1zM691 231h3v1h-3zM696 226h1v1h-1zM698 226h2v1h-2zM696 227h2v1h-2zM700 227h1v1h-1zM696 228h1v1h-1zM700 228h1v1h-1zM696 229h1v1h-1zM700 229h1v1h-1zM696 230h1v1h-1zM700 230h1v1h-1zM696 231h1v1h-1zM700 231h1v1h-1zM703 226h3v1h-3zM702 227h1v1h-1zM706 227h1v1h-1zM702 228h1v1h-1zM702 229h1v1h-1zM702 230h1v1h-1zM706 230h1v1h-1zM703 231h3v1h-3zM708 226h1v1h-1zM712 226h1v1h-1zM708 227h1v1h-1zM712 227h1v1h-1zM708 228h1v1h-1zM712 228h1v1h-1zM708 229h1v1h-1zM711 229h2v1h-2zM709 230h2v1h-2zM712 230h1v1h-1zM712 231h1v1h-1zM708 232h1v1h-1zM712 232h1v1h-1zM709 233h3v1h-3zM379 611h1v1h-1zM378 612h1v1h-1zM380 612h1v1h-1zM377 613h1v1h-1zM381 613h1v1h-1zM377 614h1v1h-1zM381 614h1v1h-1zM377 615h1v1h-1zM381 615h1v1h-1zM377 616h1v1h-1zM381 616h1v1h-1zM377 617h1v1h-1zM381 617h1v1h-1zM378 618h1v1h-1zM380 618h1v1h-1zM379 619h1v1h-1zM373 575h1v1h-1zM372 576h2v1h-2zM371 577h1v1h-1zM373 577h1v1h-1zM373 578h1v1h-1zM373 579h1v1h-1zM373 580h1v1h-1zM373 581h1v1h-1zM373 582h1v1h-1zM371 583h5v1h-5zM379 575h1v1h-1zM378 576h1v1h-1zM380 576h1v1h-1zM377 577h1v1h-1zM381 577h1v1h-1zM377 578h1v1h-1zM381 578h1v1h-1zM377 579h1v1h-1zM381 579h1v1h-1zM377 580h1v1h-1zM381 580h1v1h-1zM377 581h1v1h-1zM381 581h1v1h-1zM378 582h1v1h-1zM380 582h1v1h-1zM379 583h1v1h-1zM372 539h3v1h-3zM371 540h1v1h-1zM375 540h1v1h-1zM371 541h1v1h-1zM375 541h1v1h-1zM375 542h1v1h-1zM374 543h1v1h-1zM373 544h1v1h-1zM372 545h1v1h-1zM371 546h1v1h-1zM371 547h5v1h-5zM379 539h1v1h-1zM378 540h1v1h-1zM380 540h1v1h-1zM377 541h1v1h-1zM381 541h1v1h-1zM377 542h1v1h-1zM381 542h1v1h-1zM377 543h1v1h-1zM381 543h1v1h-1zM377 544h1v1h-1zM381 544h1v1h-1zM377 545h1v1h-1zM381 545h1v1h-1zM378 546h1v1h-1zM380 546h1v1h-1zM379 547h1v1h-1zM371 502h5v1h-5zM375 503h1v1h-1zM374 504h1v1h-1zM373 505h1v1h-1zM372 506h3v1h-3zM375 507h1v1h-1zM375 508h1v1h-1zM371 509h1v1h-1zM375 509h1v1h-1zM372 510h3v1h-3zM379 502h1v1h-1zM378 503h1v1h-1zM380 503h1v1h-1zM377 504h1v1h-1zM381 504h1v1h-1zM377 505h1v1h-1zM381 505h1v1h-1zM377 506h1v1h-1zM381 506h1v1h-1zM377 507h1v1h-1zM381 507h1v1h-1zM377 508h1v1h-1zM381 508h1v1h-1zM378 509h1v1h-1zM380 509h1v1h-1zM379 510h1v1h-1zM374 466h1v1h-1zM374 467h1v1h-1zM373 468h2v1h-2zM372 469h1v1h-1zM374 469h1v1h-1zM372 470h1v1h-1zM374 470h1v1h-1zM371 471h1v1h-1zM374 471h1v1h-1zM371 472h5v1h-5zM374 473h1v1h-1zM374 474h1v1h-1zM379 466h1v1h-1zM378 467h1v1h-1zM380 467h1v1h-1zM377 468h1v1h-1zM381 468h1v1h-1zM377 469h1v1h-1zM381 469h1v1h-1zM377 470h1v1h-1zM381 470h1v1h-1zM377 471h1v1h-1zM381 471h1v1h-1zM377 472h1v1h-1zM381 472h1v1h-1zM378 473h1v1h-1zM380 473h1v1h-1zM379 474h1v1h-1zM371 430h5v1h-5zM371 431h1v1h-1zM371 432h1v1h-1zM371 433h1v1h-1zM373 433h2v1h-2zM371 434h2v1h-2zM375 434h1v1h-1zM375 435h1v1h-1zM375 436h1v1h-1zM371 437h1v1h-1zM375 437h1v1h-1zM372 438h3v1h-3zM379 430h1v1h-1zM378 431h1v1h-1zM380 431h1v1h-1zM377 432h1v1h-1zM381 432h1v1h-1zM377 433h1v1h-1zM381 433h1v1h-1zM377 434h1v1h-1zM381 434h1v1h-1zM377 435h1v1h-1zM381 435h1v1h-1zM377 436h1v1h-1zM381 436h1v1h-1zM378 437h1v1h-1zM380 437h1v1h-1zM379 438h1v1h-1zM372 394h3v1h-3zM371 395h1v1h-1zM375 395h1v1h-1zM371 396h1v1h-1zM371 397h1v1h-1zM371 398h4v1h-4zM371 399h1v1h-1zM375 399h1v1h-1zM371 400h1v1h-1zM375 400h1v1h-1zM371 401h1v1h-1zM375 401h1v1h-1zM372 402h3v1h-3zM379 394h1v1h-1zM378 395h1v1h-1zM380 395h1v1h-1zM377 396h1v1h-1zM381 396h1v1h-1zM377 397h1v1h-1zM381 397h1v1h-1zM377 398h1v1h-1zM381 398h1v1h-1zM377 399h1v1h-1zM381 399h1v1h-1zM377 400h1v1h-1zM381 400h1v1h-1zM378 401h1v1h-1zM380 401h1v1h-1zM379 402h1v1h-1zM371 358h5v1h-5zM375 359h1v1h-1zM374 360h1v1h-1zM374 361h1v1h-1zM373 362h1v1h-1zM373 363h1v1h-1zM372 364h1v1h-1zM372 365h1v1h-1zM372 366h1v1h-1zM379 358h1v1h-1zM378 359h1v1h-1zM380 359h1v1h-1zM377 360h1v1h-1zM381 360h1v1h-1zM377 361h1v1h-1zM381 361h1v1h-1zM377 362h1v1h-1zM381 362h1v1h-1zM377 363h1v1h-1zM381 363h1v1h-1zM377 364h1v1h-1zM381 364h1v1h-1zM378 365h1v1h-1zM380 365h1v1h-1zM379 366h1v1h-1zM372 322h3v1h-3zM371 323h1v1h-1zM375 323h1v1h-1zM371 324h1v1h-1zM375 324h1v1h-1zM371 325h1v1h-1zM375 325h1v1h-1zM372 326h3v1h-3zM371 327h1v1h-1zM375 327h1v1h-1zM371 328h1v1h-1zM375 328h1v1h-1zM371 329h1v1h-1zM375 329h1v1h-1zM372 330h3v1h-3zM379 322h1v1h-1zM378 323h1v1h-1zM380 323h1v1h-1zM377 324h1v1h-1zM381 324h1v1h-1zM377 325h1v1h-1zM381 325h1v1h-1zM377 326h1v1h-1zM381 326h1v1h-1zM377 327h1v1h-1zM381 327h1v1h-1zM377 328h1v1h-1zM381 328h1v1h-1zM378 329h1v1h-1zM380 329h1v1h-1zM379 330h1v1h-1zM372 286h3v1h-3zM371 287h1v1h-1zM375 287h1v1h-1zM371 288h1v1h-1zM375 288h1v1h-1zM371 289h1v1h-1zM375 289h1v1h-1zM372 290h4v1h-4zM375 291h1v1h-1zM375 292h1v1h-1zM371 293h1v1h-1zM375 293h1v1h-1zM372 294h3v1h-3zM379 286h1v1h-1zM378 287h1v1h-1zM380 287h1v1h-1zM377 288h1v1h-1zM381 288h1v1h-1zM377 289h1v1h-1zM381 289h1v1h-1zM377 290h1v1h-1zM381 290h1v1h-1zM377 291h1v1h-1zM381 291h1v1h-1zM377 292h1v1h-1zM381 292h1v1h-1zM378 293h1v1h-1zM380 293h1v1h-1zM379 294h1v1h-1zM367 250h1v1h-1zM366 251h2v1h-2zM365 252h1v1h-1zM367 252h1v1h-1zM367 253h1v1h-1zM367 254h1v1h-1zM367 255h1v1h-1zM367 256h1v1h-1zM367 257h1v1h-1zM365 258h5v1h-5zM373 250h1v1h-1zM372 251h1v1h-1zM374 251h1v1h-1zM371 252h1v1h-1zM375 252h1v1h-1zM371 253h1v1h-1zM375 253h1v1h-1zM371 254h1v1h-1zM375 254h1v1h-1zM371 255h1v1h-1zM375 255h1v1h-1zM371 256h1v1h-1zM375 256h1v1h-1zM372 257h1v1h-1zM374 257h1v1h-1zM373 258h1v1h-1zM379 250h1v1h-1zM378 251h1v1h-1zM380 251h1v1h-1zM377 252h1v1h-1zM381 252h1v1h-1zM377 253h1v1h-1zM381 253h1v1h-1zM377 254h1v1h-1zM381 254h1v1h-1zM377 255h1v1h-1zM381 255h1v1h-1zM377 256h1v1h-1zM381 256h1v1h-1zM378 257h1v1h-1zM380 257h1v1h-1zM379 258h1v1h-1zM387 628h5v1h-5zM391 629h1v1h-1zM390 630h1v1h-1zM390 631h1v1h-1zM389 632h1v1h-1zM389 633h1v1h-1zM388 634h1v1h-1zM388 635h1v1h-1zM388 636h1v1h-1zM395 628h1v1h-1zM394 629h1v1h-1zM396 629h1v1h-1zM393 630h1v1h-1zM397 630h1v1h-1zM393 631h1v1h-1zM397 631h1v1h-1zM393 632h1v1h-1zM397 632h1v1h-1zM393 633h1v1h-1zM397 633h1v1h-1zM393 634h1v1h-1zM397 634h1v1h-1zM394 635h1v1h-1zM396 635h1v1h-1zM395 636h1v1h-1zM458 628h3v1h-3zM457 629h1v1h-1zM461 629h1v1h-1zM457 630h1v1h-1zM461 630h1v1h-1zM457 631h1v1h-1zM461 631h1v1h-1zM458 632h3v1h-3zM457 633h1v1h-1zM461 633h1v1h-1zM457 634h1v1h-1zM461 634h1v1h-1zM457 635h1v1h-1zM461 635h1v1h-1zM458 636h3v1h-3zM465 628h1v1h-1zM464 629h1v1h-1zM466 629h1v1h-1zM463 630h1v1h-1zM467 630h1v1h-1zM463 631h1v1h-1zM467 631h1v1h-1zM463 632h1v1h-1zM467 632h1v1h-1zM463 633h1v1h-1zM467 633h1v1h-1zM463 634h1v1h-1zM467 634h1v1h-1zM464 635h1v1h-1zM466 635h1v1h-1zM465 636h1v1h-1zM529 628h3v1h-3zM528 629h1v1h-1zM532 629h1v1h-1zM528 630h1v1h-1zM532 630h1v1h-1zM528 631h1v1h-1zM532 631h1v1h-1zM529 632h4v1h-4zM532 633h1v1h-1zM532 634h1v1h-1zM528 635h1v1h-1zM532 635h1v1h-1zM529 636h3v1h-3zM536 628h1v1h-1zM535 629h1v1h-1zM537 629h1v1h-1zM534 630h1v1h-1zM538 630h1v1h-1zM534 631h1v1h-1zM538 631h1v1h-1zM534 632h1v1h-1zM538 632h1v1h-1zM534 633h1v1h-1zM538 633h1v1h-1zM534 634h1v1h-1zM538 634h1v1h-1zM535 635h1v1h-1zM537 635h1v1h-1zM536 636h1v1h-1zM597 628h1v1h-1zM596 629h2v1h-2zM595 630h1v1h-1zM597 630h1v1h-1zM597 631h1v1h-1zM597 632h1v1h-1zM597 633h1v1h-1zM597 634h1v1h-1zM597 635h1v1h-1zM595 636h5v1h-5zM603 628h1v1h-1zM602 629h1v1h-1zM604 629h1v1h-1zM601 630h1v1h-1zM605 630h1v1h-1zM601 631h1v1h-1zM605 631h1v1h-1zM601 632h1v1h-1zM605 632h1v1h-1zM601 633h1v1h-1zM605 633h1v1h-1zM601 634h1v1h-1zM605 634h1v1h-1zM602 635h1v1h-1zM604 635h1v1h-1zM603 636h1v1h-1zM609 628h1v1h-1zM608 629h1v1h-1zM610 629h1v1h-1zM607 630h1v1h-1zM611 630h1v1h-1zM607 631h1v1h-1zM611 631h1v1h-1zM607 632h1v1h-1zM611 632h1v1h-1zM607 633h1v1h-1zM611 633h1v1h-1zM607 634h1v1h-1zM611 634h1v1h-1zM608 635h1v1h-1zM610 635h1v1h-1zM609 636h1v1h-1zM668 628h1v1h-1zM667 629h2v1h-2zM666 630h1v1h-1zM668 630h1v1h-1zM668 631h1v1h-1zM668 632h1v1h-1zM668 633h1v1h-1zM668 634h1v1h-1zM668 635h1v1h-1zM666 636h5v1h-5zM674 628h1v1h-1zM673 629h2v1h-2zM672 630h1v1h-1zM674 630h1v1h-1zM674 631h1v1h-1zM674 632h1v1h-1zM674 633h1v1h-1zM674 634h1v1h-1zM674 635h1v1h-1zM672 636h5v1h-5zM680 628h1v1h-1zM679 629h1v1h-1zM681 629h1v1h-1zM678 630h1v1h-1zM682 630h1v1h-1zM678 631h1v1h-1zM682 631h1v1h-1zM678 632h1v1h-1zM682 632h1v1h-1zM678 633h1v1h-1zM682 633h1v1h-1zM678 634h1v1h-1zM682 634h1v1h-1zM679 635h1v1h-1zM681 635h1v1h-1zM680 636h1v1h-1zM738 628h1v1h-1zM737 629h2v1h-2zM736 630h1v1h-1zM738 630h1v1h-1zM738 631h1v1h-1zM738 632h1v1h-1zM738 633h1v1h-1zM738 634h1v1h-1zM738 635h1v1h-1zM736 636h5v1h-5zM743 628h3v1h-3zM742 629h1v1h-1zM746 629h1v1h-1zM742 630h1v1h-1zM746 630h1v1h-1zM746 631h1v1h-1zM745 632h1v1h-1zM744 633h1v1h-1zM743 634h1v1h-1zM742 635h1v1h-1zM742 636h5v1h-5zM750 628h1v1h-1zM749 629h1v1h-1zM751 629h1v1h-1zM748 630h1v1h-1zM752 630h1v1h-1zM748 631h1v1h-1zM752 631h1v1h-1zM748 632h1v1h-1zM752 632h1v1h-1zM748 633h1v1h-1zM752 633h1v1h-1zM748 634h1v1h-1zM752 634h1v1h-1zM749 635h1v1h-1zM751 635h1v1h-1zM750 636h1v1h-1zM809 628h1v1h-1zM808 629h2v1h-2zM807 630h1v1h-1zM809 630h1v1h-1zM809 631h1v1h-1zM809 632h1v1h-1zM809 633h1v1h-1zM809 634h1v1h-1zM809 635h1v1h-1zM807 636h5v1h-5zM813 628h5v1h-5zM817 629h1v1h-1zM816 630h1v1h-1zM815 631h1v1h-1zM814 632h3v1h-3zM817 633h1v1h-1zM817 634h1v1h-1zM813 635h1v1h-1zM817 635h1v1h-1zM814 636h3v1h-3zM821 628h1v1h-1zM820 629h1v1h-1zM822 629h1v1h-1zM819 630h1v1h-1zM823 630h1v1h-1zM819 631h1v1h-1zM823 631h1v1h-1zM819 632h1v1h-1zM823 632h1v1h-1zM819 633h1v1h-1zM823 633h1v1h-1zM819 634h1v1h-1zM823 634h1v1h-1zM820 635h1v1h-1zM822 635h1v1h-1zM821 636h1v1h-1zM880 628h1v1h-1zM879 629h2v1h-2zM878 630h1v1h-1zM880 630h1v1h-1zM880 631h1v1h-1zM880 632h1v1h-1zM880 633h1v1h-1zM880 634h1v1h-1zM880 635h1v1h-1zM878 636h5v1h-5zM887 628h1v1h-1zM887 629h1v1h-1zM886 630h2v1h-2zM885 631h1v1h-1zM887 631h1v1h-1zM885 632h1v1h-1zM887 632h1v1h-1zM884 633h1v1h-1zM887 633h1v1h-1zM884 634h5v1h-5zM887 635h1v1h-1zM887 636h1v1h-1zM892 628h1v1h-1zM891 629h1v1h-1zM893 629h1v1h-1zM890 630h1v1h-1zM894 630h1v1h-1zM890 631h1v1h-1zM894 631h1v1h-1zM890 632h1v1h-1zM894 632h1v1h-1zM890 633h1v1h-1zM894 633h1v1h-1zM890 634h1v1h-1zM894 634h1v1h-1zM891 635h1v1h-1zM893 635h1v1h-1zM892 636h1v1h-1zM950 628h1v1h-1zM949 629h2v1h-2zM948 630h1v1h-1zM950 630h1v1h-1zM950 631h1v1h-1zM950 632h1v1h-1zM950 633h1v1h-1zM950 634h1v1h-1zM950 635h1v1h-1zM948 636h5v1h-5zM954 628h5v1h-5zM954 629h1v1h-1zM954 630h1v1h-1zM954 631h1v1h-1zM956 631h2v1h-2zM954 632h2v1h-2zM958 632h1v1h-1zM958 633h1v1h-1zM958 634h1v1h-1zM954 635h1v1h-1zM958 635h1v1h-1zM955 636h3v1h-3zM962 628h1v1h-1zM961 629h1v1h-1zM963 629h1v1h-1zM960 630h1v1h-1zM964 630h1v1h-1zM960 631h1v1h-1zM964 631h1v1h-1zM960 632h1v1h-1zM964 632h1v1h-1zM960 633h1v1h-1zM964 633h1v1h-1zM960 634h1v1h-1zM964 634h1v1h-1zM961 635h1v1h-1zM963 635h1v1h-1zM962 636h1v1h-1z" fill="#000"/>
</svg>
</div></body></html>
